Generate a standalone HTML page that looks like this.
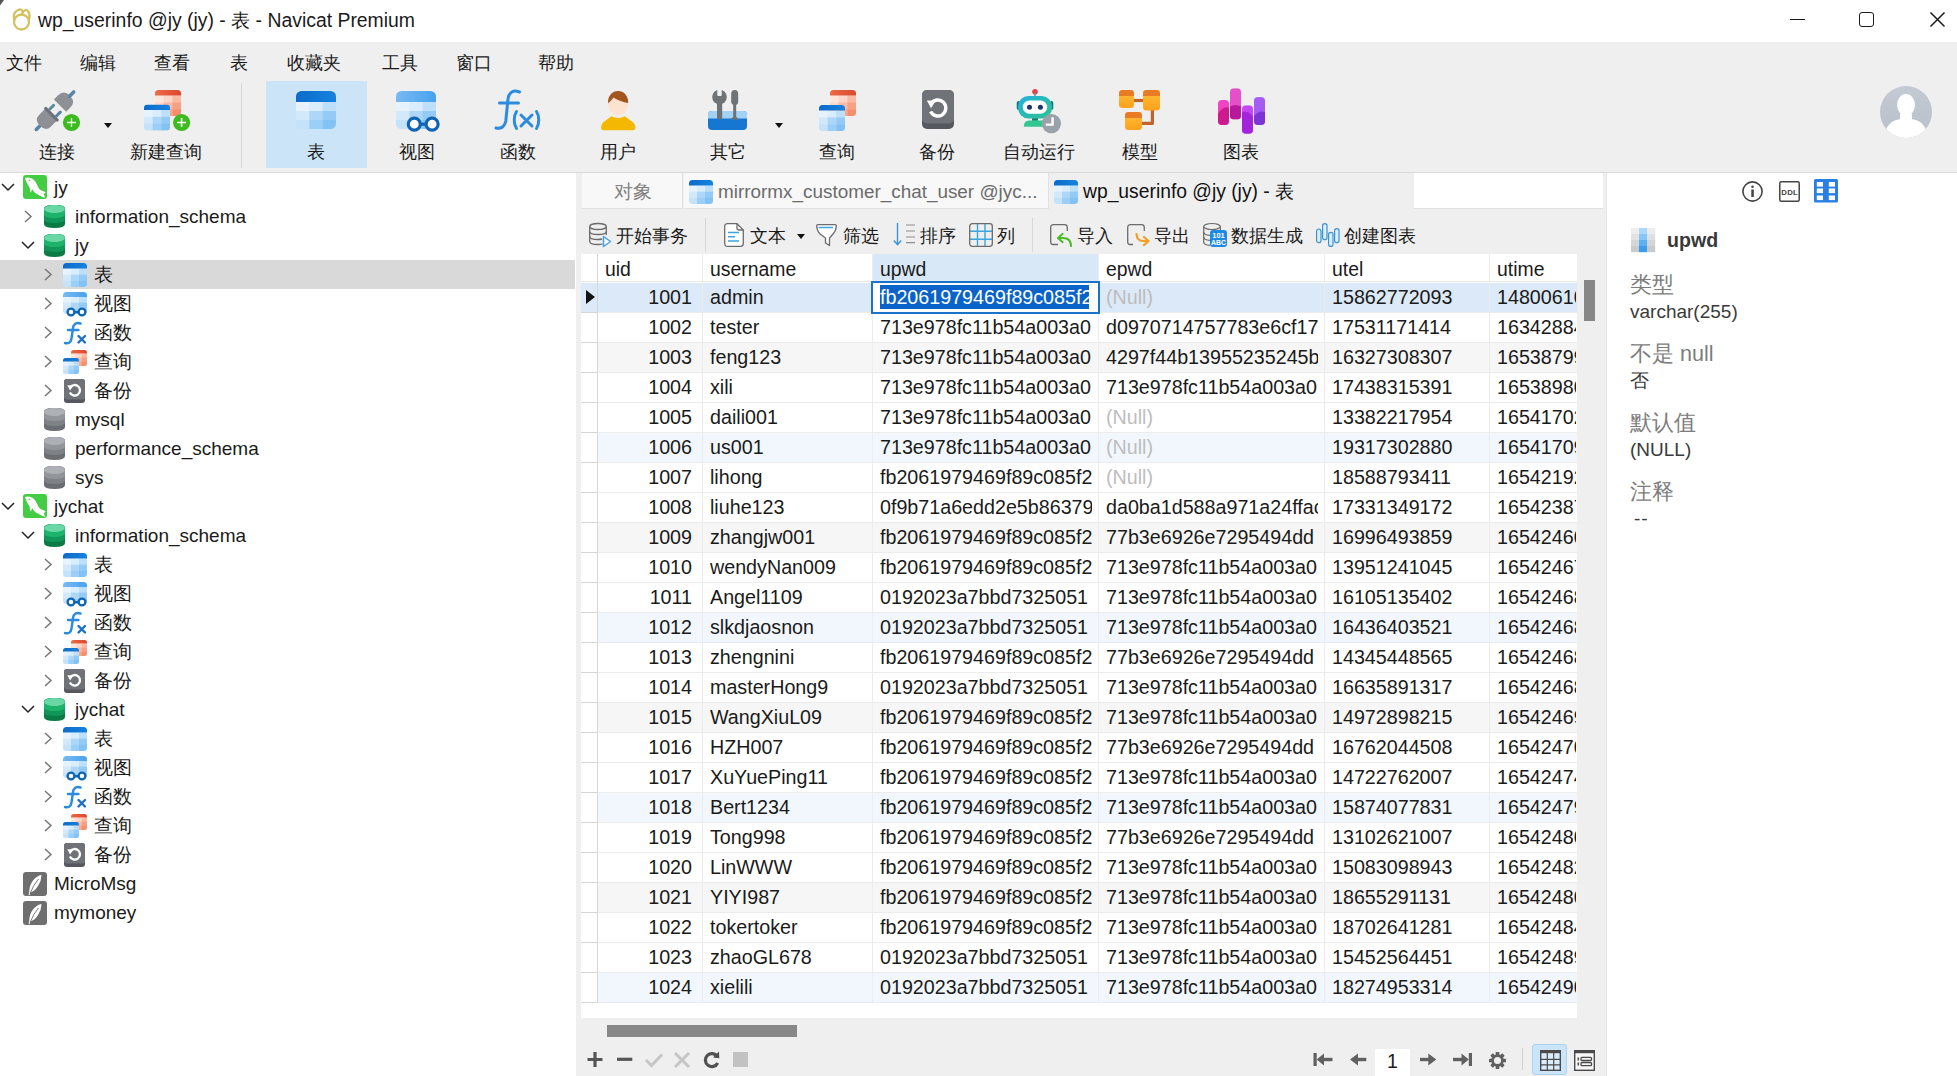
<!DOCTYPE html><html><head><meta charset="utf-8"><style>
*{margin:0;padding:0;box-sizing:border-box}
html,body{width:1957px;height:1076px;overflow:hidden;background:#efefef;font-family:"Liberation Sans",sans-serif;color:#1a1a1a}
.a{position:absolute}
.t{position:absolute;white-space:nowrap}
svg{position:absolute;overflow:visible}
</style></head><body>
<svg width="0" height="0" style="position:absolute"><defs>
<linearGradient id="gTH" x1="0" y1="0" x2="1" y2="0"><stop offset="0" stop-color="#0b6bcb"/><stop offset="1" stop-color="#1782de"/></linearGradient>
<linearGradient id="gVH" x1="0" y1="0" x2="1" y2="0"><stop offset="0" stop-color="#78b9f3"/><stop offset="1" stop-color="#48a2ee"/></linearGradient>
<linearGradient id="gRH" x1="0" y1="0" x2="1" y2="0"><stop offset="0" stop-color="#ef6a45"/><stop offset="1" stop-color="#d9482c"/></linearGradient>
<linearGradient id="gDBG" x1="0" y1="0" x2="0" y2="1"><stop offset="0" stop-color="#2fc27a"/><stop offset="1" stop-color="#0b7d45"/></linearGradient>
<linearGradient id="gDBX" x1="0" y1="0" x2="0" y2="1"><stop offset="0" stop-color="#a3a3a3"/><stop offset="1" stop-color="#6e6e6e"/></linearGradient>
<linearGradient id="gBars1" x1="0" y1="0" x2="0" y2="1"><stop offset="0" stop-color="#f052c8"/><stop offset="1" stop-color="#c0208f"/></linearGradient>
<linearGradient id="gBars2" x1="0" y1="0" x2="0" y2="1"><stop offset="0" stop-color="#c455f0"/><stop offset="1" stop-color="#8a2bd0"/></linearGradient>
<linearGradient id="gOr" x1="0" y1="0" x2="0" y2="1"><stop offset="0" stop-color="#ffbf3a"/><stop offset="1" stop-color="#fba21b"/></linearGradient>
<linearGradient id="gAva" x1="0" y1="0" x2="0" y2="1"><stop offset="0" stop-color="#c3cad3"/><stop offset="1" stop-color="#b8c0ca"/></linearGradient>
</defs></svg>
<div class="a" style="left:0;top:0;width:1957px;height:42px;background:#fff"></div>
<div class="t" style="left:38px;top:6.5px;font-size:19.4px;line-height:26px">wp_userinfo @jy (jy) - 表 - Navicat Premium</div>
<svg style="left:0;top:0" width="6" height="6"><path d="M0 0H4L0 5.5Z" fill="#555"/></svg>
<div class="a" style="left:1790px;top:18.5px;width:15px;height:1.2px;background:#1a1a1a"></div>
<div class="a" style="left:1859px;top:12px;width:15px;height:15px;border:1.8px solid #1a1a1a;border-radius:3px"></div>
<svg style="left:1930px;top:12px" width="15" height="15"><path d="M0.5 0.5L14.5 14.5M14.5 0.5L0.5 14.5" stroke="#1a1a1a" stroke-width="1.5"/></svg>
<div class="t" style="left:6px;top:49.5px;font-size:18.2px;line-height:26px">文件</div>
<div class="t" style="left:80px;top:49.5px;font-size:18.2px;line-height:26px">编辑</div>
<div class="t" style="left:154px;top:49.5px;font-size:18.2px;line-height:26px">查看</div>
<div class="t" style="left:230px;top:49.5px;font-size:18.2px;line-height:26px">表</div>
<div class="t" style="left:287px;top:49.5px;font-size:18.2px;line-height:26px">收藏夹</div>
<div class="t" style="left:382px;top:49.5px;font-size:18.2px;line-height:26px">工具</div>
<div class="t" style="left:456px;top:49.5px;font-size:18.2px;line-height:26px">窗口</div>
<div class="t" style="left:538px;top:49.5px;font-size:18.2px;line-height:26px">帮助</div>
<div class="a" style="left:266px;top:81px;width:101px;height:87px;background:#cce4f7"></div>
<div class="a" style="left:241px;top:83px;width:1px;height:85px;background:#d8d8d8"></div>
<div class="t" style="left:-3px;width:120px;text-align:center;top:139px;font-size:18px;line-height:26px">连接</div>
<div class="t" style="left:106px;width:120px;text-align:center;top:139px;font-size:18px;line-height:26px">新建查询</div>
<div class="t" style="left:256px;width:120px;text-align:center;top:139px;font-size:18px;line-height:26px">表</div>
<div class="t" style="left:357px;width:120px;text-align:center;top:139px;font-size:18px;line-height:26px">视图</div>
<div class="t" style="left:458px;width:120px;text-align:center;top:139px;font-size:18px;line-height:26px">函数</div>
<div class="t" style="left:558px;width:120px;text-align:center;top:139px;font-size:18px;line-height:26px">用户</div>
<div class="t" style="left:668px;width:120px;text-align:center;top:139px;font-size:18px;line-height:26px">其它</div>
<div class="t" style="left:777px;width:120px;text-align:center;top:139px;font-size:18px;line-height:26px">查询</div>
<div class="t" style="left:877px;width:120px;text-align:center;top:139px;font-size:18px;line-height:26px">备份</div>
<div class="t" style="left:979px;width:120px;text-align:center;top:139px;font-size:18px;line-height:26px">自动运行</div>
<div class="t" style="left:1080px;width:120px;text-align:center;top:139px;font-size:18px;line-height:26px">模型</div>
<div class="t" style="left:1181px;width:120px;text-align:center;top:139px;font-size:18px;line-height:26px">图表</div>
<svg style="left:104px;top:123px" width="8" height="5"><path d="M0 0H8L4 5Z" fill="#111"/></svg>
<svg style="left:775px;top:123px" width="8" height="5"><path d="M0 0H8L4 5Z" fill="#111"/></svg>
<svg style="left:10px;top:8px" width="23" height="23" viewBox="0 0 23 23"><g fill="none" stroke="#d3c260" stroke-width="2.3"><ellipse cx="11.5" cy="14" rx="7.5" ry="7.5"/><path d="M4.5 13 Q2 5 8 2 Q12 0 13 5"/><path d="M18.5 13 Q21 6 17.5 2.5 Q14 1 12 6"/></g></svg>
<svg style="left:34px;top:89px" width="48" height="44" viewBox="0 0 48 44"><g transform="translate(20.799999999999997,21.900000000000006) rotate(-45)"><rect x="-28" y="-1.8" width="10" height="3.6" rx="1.8" fill="#5b83a6"/><path d="M-5 -8.3 H-14 Q-21 -8.3 -21 0 Q-21 8.3 -14 8.3 H-5Z" fill="#8d9196"/><rect x="-6.3" y="-9.6" width="3.2" height="19.2" rx="1.4" fill="#6e7276"/><rect x="-4" y="-6.3" width="8.5" height="3" rx="1.5" fill="#5b8e9c"/><rect x="-4" y="3.3" width="8.5" height="3" rx="1.5" fill="#5b83a6"/><path d="M7.4 -8.7 H13 Q21.5 -8.7 21.5 0 Q21.5 8.7 13 8.7 H7.4Z" fill="#8d9196"/><rect x="19" y="-1.8" width="9.5" height="3.6" rx="1.8" fill="#5b83a6"/></g><circle cx="37.5" cy="33.5" r="8.6" fill="#3dbb1e"/><path d="M33 33.5H42M37.5 29V38" stroke="#e8ffe0" stroke-width="1.3"/></svg>
<svg style="left:144px;top:90px" width="48" height="44" viewBox="0 0 48 44"><g transform="translate(11,0)"><clipPath id="tc1"><rect width="26" height="26" rx="3.5"/></clipPath><g clip-path="url(#tc1)"><rect x="0.00" y="5.50" width="8.97" height="7.13" fill="#fde6dc"/><rect x="8.67" y="5.50" width="8.97" height="7.13" fill="#fcd6c8"/><rect x="17.33" y="5.50" width="8.97" height="7.13" fill="#f9b9a3"/><rect x="0.00" y="12.33" width="8.97" height="7.13" fill="#fcd9cb"/><rect x="8.67" y="12.33" width="8.97" height="7.13" fill="#f9bba5"/><rect x="17.33" y="12.33" width="8.97" height="7.13" fill="#f6a084"/><rect x="0.00" y="19.17" width="8.97" height="7.13" fill="#fbc9b6"/><rect x="8.67" y="19.17" width="8.97" height="7.13" fill="#f7a98f"/><rect x="17.33" y="19.17" width="8.97" height="7.13" fill="#f38e6f"/><rect width="26" height="5.5" fill="url(#gRH)"/></g></g><g transform="translate(0,14.5)"><clipPath id="tc2"><rect width="26" height="26" rx="3.5"/></clipPath><g clip-path="url(#tc2)"><rect x="0.00" y="5.50" width="8.97" height="7.13" fill="#e6f3fd"/><rect x="8.67" y="5.50" width="8.97" height="7.13" fill="#d9edfc"/><rect x="17.33" y="5.50" width="8.97" height="7.13" fill="#bcdffa"/><rect x="0.00" y="12.33" width="8.97" height="7.13" fill="#d2e8fb"/><rect x="8.67" y="12.33" width="8.97" height="7.13" fill="#add6f8"/><rect x="17.33" y="12.33" width="8.97" height="7.13" fill="#94caf6"/><rect x="0.00" y="19.17" width="8.97" height="7.13" fill="#c4e2f9"/><rect x="8.67" y="19.17" width="8.97" height="7.13" fill="#9bcff7"/><rect x="17.33" y="19.17" width="8.97" height="7.13" fill="#82c2f4"/><rect width="26" height="5.5" fill="url(#gTH)"/></g></g><circle cx="37.6" cy="32.5" r="8.6" fill="#3dbb1e"/><path d="M33.1 32.5H42.1M37.6 28.0V37.0" stroke="#fff" stroke-width="1.6"/></svg>
<svg style="left:296px;top:91px" width="40" height="38" viewBox="0 0 40 38"><clipPath id="tc3"><rect width="40" height="38" rx="5.5"/></clipPath><g clip-path="url(#tc3)"><rect x="0.00" y="11.00" width="13.63" height="9.30" fill="#e6f3fd"/><rect x="13.33" y="11.00" width="13.63" height="9.30" fill="#d9edfc"/><rect x="26.67" y="11.00" width="13.63" height="9.30" fill="#bcdffa"/><rect x="0.00" y="20.00" width="13.63" height="9.30" fill="#d2e8fb"/><rect x="13.33" y="20.00" width="13.63" height="9.30" fill="#add6f8"/><rect x="26.67" y="20.00" width="13.63" height="9.30" fill="#94caf6"/><rect x="0.00" y="29.00" width="13.63" height="9.30" fill="#c4e2f9"/><rect x="13.33" y="29.00" width="13.63" height="9.30" fill="#9bcff7"/><rect x="26.67" y="29.00" width="13.63" height="9.30" fill="#82c2f4"/><rect width="40" height="11" fill="url(#gTH)"/></g></svg>
<svg style="left:396px;top:91px" width="44" height="42" viewBox="0 0 44 42"><clipPath id="tc4"><rect width="40" height="38" rx="5.5"/></clipPath><g clip-path="url(#tc4)"><rect x="0.00" y="11.00" width="13.63" height="9.30" fill="#e6f3fd"/><rect x="13.33" y="11.00" width="13.63" height="9.30" fill="#d9edfc"/><rect x="26.67" y="11.00" width="13.63" height="9.30" fill="#bcdffa"/><rect x="0.00" y="20.00" width="13.63" height="9.30" fill="#d2e8fb"/><rect x="13.33" y="20.00" width="13.63" height="9.30" fill="#add6f8"/><rect x="26.67" y="20.00" width="13.63" height="9.30" fill="#94caf6"/><rect x="0.00" y="29.00" width="13.63" height="9.30" fill="#c4e2f9"/><rect x="13.33" y="29.00" width="13.63" height="9.30" fill="#9bcff7"/><rect x="26.67" y="29.00" width="13.63" height="9.30" fill="#82c2f4"/><rect width="40" height="11" fill="url(#gVH)"/></g><g fill="#fff" stroke="#0f64b4" stroke-width="3.2"><circle cx="18.3" cy="33.2" r="6"/><circle cx="36.1" cy="33.2" r="6"/></g><rect x="23.5" y="31.6" width="7" height="3.2" fill="#0f64b4"/></svg>
<svg style="left:490px;top:79px" width="56" height="56" viewBox="0 0 56 56"><g fill="none" stroke="#2a8be0" stroke-width="3" stroke-linecap="round"><path d="M29.5 13 C23.5 10.5 19 13 18 20 L15.8 42 C14.8 47.5 11.5 50 6 49"/><path d="M9.5 24 H28.5"/><path d="M26.5 32.5 C23.5 37 23.5 45 26.5 49.5"/><path d="M46.5 32.5 C49.5 37 49.5 45 46.5 49.5"/><path d="M31 36 L42 47 M42 36 L31 47"/></g></svg>
<svg style="left:600px;top:91px" width="37" height="40" viewBox="0 0 37 40"><ellipse cx="18.1" cy="12.4" rx="10.1" ry="12.2" fill="#fde3cf"/><path d="M8 12.2C7.8 4.5 12.5 0 18.1 0C23.7 0 28.4 4.5 28.2 12C23 11.2 18 9.2 13.4 6.5C12 8.8 10 10.8 8 12.2Z" fill="#a3541f"/><path d="M1 36.3Q1 33 4.2 30.6L11.5 25.2Q14.6 27 18.1 27Q21.6 27 24.7 25.2L32 30.6Q35.4 33 35.4 36.3Q35.4 39.2 32.8 39.2H3.6Q1 39.2 1 36.3Z" fill="#f5b800"/></svg>
<svg style="left:708px;top:90px" width="40" height="40" viewBox="0 0 40 40"><rect x="0" y="21" width="39" height="19" rx="4" fill="#1677d3"/><path d="M4 21H35Q39 21 39 25V28.5H0V25Q0 21 4 21Z" fill="#a3d2f7"/><g fill="#6e7377"><circle cx="11.5" cy="7" r="7.3"/><rect x="9" y="9" width="5.2" height="20"/><path d="M23.2 4Q23.2 0 26.7 0Q30.2 0 30.2 4V12Q30.2 14 28.2 15V27L31.5 29.5H22L25.2 27V15Q23.2 14 23.2 12Z"/></g><rect x="9.3" y="-1" width="4.4" height="7" rx="1" fill="#efefef"/></svg>
<svg style="left:819px;top:90px" width="38" height="41" viewBox="0 0 38 41"><g transform="translate(11,0)"><clipPath id="tc5"><rect width="26" height="26" rx="3.5"/></clipPath><g clip-path="url(#tc5)"><rect x="0.00" y="5.50" width="8.97" height="7.13" fill="#fde6dc"/><rect x="8.67" y="5.50" width="8.97" height="7.13" fill="#fcd6c8"/><rect x="17.33" y="5.50" width="8.97" height="7.13" fill="#f9b9a3"/><rect x="0.00" y="12.33" width="8.97" height="7.13" fill="#fcd9cb"/><rect x="8.67" y="12.33" width="8.97" height="7.13" fill="#f9bba5"/><rect x="17.33" y="12.33" width="8.97" height="7.13" fill="#f6a084"/><rect x="0.00" y="19.17" width="8.97" height="7.13" fill="#fbc9b6"/><rect x="8.67" y="19.17" width="8.97" height="7.13" fill="#f7a98f"/><rect x="17.33" y="19.17" width="8.97" height="7.13" fill="#f38e6f"/><rect width="26" height="5.5" fill="url(#gRH)"/></g></g><g transform="translate(0,15)"><clipPath id="tc6"><rect width="26" height="26" rx="3.5"/></clipPath><g clip-path="url(#tc6)"><rect x="0.00" y="5.50" width="8.97" height="7.13" fill="#e6f3fd"/><rect x="8.67" y="5.50" width="8.97" height="7.13" fill="#d9edfc"/><rect x="17.33" y="5.50" width="8.97" height="7.13" fill="#bcdffa"/><rect x="0.00" y="12.33" width="8.97" height="7.13" fill="#d2e8fb"/><rect x="8.67" y="12.33" width="8.97" height="7.13" fill="#add6f8"/><rect x="17.33" y="12.33" width="8.97" height="7.13" fill="#94caf6"/><rect x="0.00" y="19.17" width="8.97" height="7.13" fill="#c4e2f9"/><rect x="8.67" y="19.17" width="8.97" height="7.13" fill="#9bcff7"/><rect x="17.33" y="19.17" width="8.97" height="7.13" fill="#82c2f4"/><rect width="26" height="5.5" fill="url(#gTH)"/></g></g></svg>
<svg style="left:922px;top:90px" width="32" height="39" viewBox="0 0 32 39"><rect x="0" y="0" width="32" height="39" rx="5" fill="#55595d"/><rect x="0" y="0" width="32" height="33.5" rx="5" fill="#6f7377"/><path d="M9.2 13.5A8 8 0 1 1 8.6 21.5" fill="none" stroke="#fff" stroke-width="3.4"/><path d="M4.8 10.5L13.8 10.8L9 18.3Z" fill="#fff"/></svg>
<svg style="left:1017px;top:88px" width="46" height="46" viewBox="0 0 46 46"><linearGradient id="gRob" x1="0" y1="0" x2="1" y2="1"><stop offset="0" stop-color="#25b2dc"/><stop offset="1" stop-color="#2cc28f"/></linearGradient><circle cx="18" cy="3.8" r="2.8" fill="#e8404a"/><rect x="17.3" y="5" width="1.4" height="3.5" fill="#6b8e96"/><rect x="-0.3" y="13" width="4" height="9" rx="2" fill="#137a84"/><rect x="32.3" y="13" width="4" height="9" rx="2" fill="#137a84"/><rect x="1" y="8" width="34" height="22.5" rx="10.5" fill="url(#gRob)"/><rect x="5.8" y="12.5" width="24.4" height="13.3" rx="6.6" fill="#fff"/><circle cx="12.5" cy="19.3" r="2.5" fill="#1d3470"/><circle cx="23.4" cy="19.3" r="2.5" fill="#1d3470"/><rect x="15" y="30.3" width="6" height="2.6" fill="#10806a"/><path d="M6.8 38.7 Q6.8 32.6 12 32.6 L26 32.6 L26 38.7Z" fill="#33c794"/><circle cx="34.4" cy="35.6" r="9.6" fill="#9aa1a9"/><path d="M35.6 29.3 V36.6 H28.8" fill="none" stroke="#fff" stroke-width="2.4"/></svg>
<svg style="left:1119px;top:90px" width="42" height="41" viewBox="0 0 42 41"><g stroke="#c0652a" stroke-width="3.2" fill="none" stroke-linejoin="round"><path d="M14 10.5 H25"/><path d="M33.4 20 V33.4 H22"/></g><rect x="0" y="0" width="15" height="18" rx="3.5" fill="url(#gOr)"/><path d="M0 3.5 Q0 0 3.5 0 H11.5 Q15 0 15 3.5 V6 H0Z" fill="#e97b24"/><rect x="24" y="0" width="17" height="20.6" rx="3.5" fill="url(#gOr)"/><path d="M24 3.5 Q24 0 27.5 0 H37.5 Q41 0 41 3.5 V6 H24Z" fill="#e97b24"/><rect x="6" y="22" width="17" height="18" rx="3.5" fill="url(#gOr)"/><path d="M6 25.5 Q6 22 9.5 22 H19.5 Q23 22 23 25.5 V28 H6Z" fill="#e97b24"/></svg>
<svg style="left:1218px;top:82px" width="47" height="52" viewBox="0 0 47 52"><clipPath id="cb0"><rect x="0" y="18" width="11" height="25" rx="4"/></clipPath><g clip-path="url(#cb0)"><rect x="0" y="18" width="11" height="25" fill="#f243c4"/><path d="M0 31.8 Q5.5 23.4 11 25.9 V43 H0Z" fill="#cf1a8e"/></g><clipPath id="cb12"><rect x="12" y="6.2" width="11" height="31.3" rx="4"/></clipPath><g clip-path="url(#cb12)"><rect x="12" y="6.2" width="11" height="31.3" fill="#e54fc9"/><path d="M12 24.5 Q17.5 22.0 23 24.5 V37.5 H12Z" fill="#b9189c"/></g><clipPath id="cb24"><rect x="24" y="23.2" width="11" height="28.6" rx="4"/></clipPath><g clip-path="url(#cb24)"><rect x="24" y="23.2" width="11" height="28.6" fill="#c447f5"/><path d="M24 30.2 Q29.5 27.7 35 35 V51.8 H24Z" fill="#a424dc"/></g><clipPath id="cb36"><rect x="36" y="15.1" width="11" height="27.8" rx="4"/></clipPath><g clip-path="url(#cb36)"><rect x="36" y="15.1" width="11" height="27.8" fill="#a45cf2"/><path d="M36 34 Q41.5 27.7 47 30.2 V42.9 H36Z" fill="#7c34d4"/></g></svg>
<svg style="left:1880px;top:86px" width="52" height="52" viewBox="0 0 52 52"><circle cx="26" cy="26" r="26" fill="url(#gAva)"/><clipPath id="avc"><circle cx="26" cy="26" r="26"/></clipPath><g clip-path="url(#avc)" fill="#fff"><ellipse cx="26" cy="19" rx="9" ry="11"/><path d="M20 28 H32 V34 H20Z"/><path d="M4 56 Q4 34 22 33 H30 Q48 34 48 56Z"/></g></svg>
<div class="a" style="left:0;top:172px;width:1957px;height:1px;background:#d9d9d9"></div>
<div class="a" style="left:0;top:173px;width:576px;height:903px;background:#fff"></div>
<div class="a" style="left:0;top:260px;width:575px;height:29px;background:#d9d9d9"></div>
<svg style="left:1px;top:183px" width="14" height="8"><path d="M1 1L7 7L13 1" fill="none" stroke="#222" stroke-width="1.5"/></svg>
<svg style="left:23px;top:175px" width="24" height="24" viewBox="0 0 24 24"><rect x="0" y="0" width="24" height="24" rx="3" fill="#45cc45"/><path d="M2 3C4.5 1.8 8.5 2.3 11 5C13.3 7.5 14.3 10 15.3 12.5C16.3 14.5 18.3 15.6 21.2 16.6L22.6 17.6L20.8 19.3L22 22.6C19.5 22.2 17.4 21.2 15.4 19.7C12.4 18.7 10.4 16.7 9.4 14.2L7.4 17.8L6.6 12.6C4.8 10 3.3 7 2 3Z" fill="#fff"/><circle cx="6.3" cy="5.3" r=".8" fill="#45cc45"/></svg>
<div class="t" style="left:54px;top:174px;font-size:19px;line-height:27px">jy</div>
<svg style="left:24px;top:210px" width="8" height="13"><path d="M1 1L7 6.5L1 12" fill="none" stroke="#777" stroke-width="1.5"/></svg>
<svg style="left:44px;top:205px" width="21" height="23" viewBox="0 0 21 23"><path d="M0 4 Q0 0 10.5 0 Q21 0 21 4 V19 Q21 23 10.5 23 Q0 23 0 19Z" fill="#0b7b46"/><path d="M0 4 Q0 0 10.5 0 Q21 0 21 4 V14 Q21 18 10.5 18 Q0 18 0 14Z" fill="#109659"/><path d="M0 4 Q0 0 10.5 0 Q21 0 21 4 V9 Q21 13 10.5 13 Q0 13 0 9Z" fill="#1db36b"/><ellipse cx="10.5" cy="4" rx="10.5" ry="4" fill="#6ad8a6"/></svg>
<div class="t" style="left:75px;top:203px;font-size:19px;line-height:27px">information_schema</div>
<svg style="left:21px;top:241px" width="14" height="8"><path d="M1 1L7 7L13 1" fill="none" stroke="#222" stroke-width="1.5"/></svg>
<svg style="left:44px;top:234px" width="21" height="23" viewBox="0 0 21 23"><path d="M0 4 Q0 0 10.5 0 Q21 0 21 4 V19 Q21 23 10.5 23 Q0 23 0 19Z" fill="#0b7b46"/><path d="M0 4 Q0 0 10.5 0 Q21 0 21 4 V14 Q21 18 10.5 18 Q0 18 0 14Z" fill="#109659"/><path d="M0 4 Q0 0 10.5 0 Q21 0 21 4 V9 Q21 13 10.5 13 Q0 13 0 9Z" fill="#1db36b"/><ellipse cx="10.5" cy="4" rx="10.5" ry="4" fill="#6ad8a6"/></svg>
<div class="t" style="left:75px;top:232px;font-size:19px;line-height:27px">jy</div>
<svg style="left:44px;top:268px" width="8" height="13"><path d="M1 1L7 6.5L1 12" fill="none" stroke="#777" stroke-width="1.5"/></svg>
<svg style="left:63px;top:263px" width="24" height="24" viewBox="0 0 24 24"><clipPath id="tc7"><rect width="24" height="24" rx="3.5"/></clipPath><g clip-path="url(#tc7)"><rect x="0.00" y="5.50" width="8.30" height="6.47" fill="#e6f3fd"/><rect x="8.00" y="5.50" width="8.30" height="6.47" fill="#d9edfc"/><rect x="16.00" y="5.50" width="8.30" height="6.47" fill="#bcdffa"/><rect x="0.00" y="11.67" width="8.30" height="6.47" fill="#d2e8fb"/><rect x="8.00" y="11.67" width="8.30" height="6.47" fill="#add6f8"/><rect x="16.00" y="11.67" width="8.30" height="6.47" fill="#94caf6"/><rect x="0.00" y="17.83" width="8.30" height="6.47" fill="#c4e2f9"/><rect x="8.00" y="17.83" width="8.30" height="6.47" fill="#9bcff7"/><rect x="16.00" y="17.83" width="8.30" height="6.47" fill="#82c2f4"/><rect width="24" height="5.5" fill="url(#gTH)"/></g></svg>
<div class="t" style="left:94px;top:261px;font-size:19px;line-height:27px">表</div>
<svg style="left:44px;top:297px" width="8" height="13"><path d="M1 1L7 6.5L1 12" fill="none" stroke="#777" stroke-width="1.5"/></svg>
<svg style="left:63px;top:292px" width="24" height="24" viewBox="0 0 24 24"><clipPath id="tc8"><rect width="24" height="22" rx="3.5"/></clipPath><g clip-path="url(#tc8)"><rect x="0.00" y="5.00" width="8.30" height="5.97" fill="#e6f3fd"/><rect x="8.00" y="5.00" width="8.30" height="5.97" fill="#d9edfc"/><rect x="16.00" y="5.00" width="8.30" height="5.97" fill="#bcdffa"/><rect x="0.00" y="10.67" width="8.30" height="5.97" fill="#d2e8fb"/><rect x="8.00" y="10.67" width="8.30" height="5.97" fill="#add6f8"/><rect x="16.00" y="10.67" width="8.30" height="5.97" fill="#94caf6"/><rect x="0.00" y="16.33" width="8.30" height="5.97" fill="#c4e2f9"/><rect x="8.00" y="16.33" width="8.30" height="5.97" fill="#9bcff7"/><rect x="16.00" y="16.33" width="8.30" height="5.97" fill="#82c2f4"/><rect width="24" height="5" fill="url(#gVH)"/></g><g fill="#fff" stroke="#0f64b4" stroke-width="2.3"><circle cx="8" cy="20" r="3.4"/><circle cx="19" cy="20" r="3.4"/></g><rect x="11" y="19" width="4.5" height="2.2" fill="#0f64b4"/></svg>
<div class="t" style="left:94px;top:290px;font-size:19px;line-height:27px">视图</div>
<svg style="left:44px;top:326px" width="8" height="13"><path d="M1 1L7 6.5L1 12" fill="none" stroke="#777" stroke-width="1.5"/></svg>
<svg style="left:63px;top:321px" width="24" height="24" viewBox="0 0 24 24"><g fill="none" stroke="#2a8be0" stroke-width="2.4" stroke-linecap="round"><path d="M17.5 2.5 C13 1 10.5 3 10 7 L8.5 17.5 C8 21.5 5.5 23 2 22"/><path d="M5 9 H15.5"/></g><path d="M15.5 15 L22 21.5 M22 15 L15.5 21.5" stroke="#1a6fc7" stroke-width="2.4" stroke-linecap="round"/></svg>
<div class="t" style="left:94px;top:319px;font-size:19px;line-height:27px">函数</div>
<svg style="left:44px;top:355px" width="8" height="13"><path d="M1 1L7 6.5L1 12" fill="none" stroke="#777" stroke-width="1.5"/></svg>
<svg style="left:63px;top:350px" width="24" height="24" viewBox="0 0 24 24"><g transform="translate(8,0)"><clipPath id="tc9"><rect width="16" height="16" rx="2.5"/></clipPath><g clip-path="url(#tc9)"><rect x="0.00" y="3.50" width="5.63" height="4.47" fill="#fde6dc"/><rect x="5.33" y="3.50" width="5.63" height="4.47" fill="#fcd6c8"/><rect x="10.67" y="3.50" width="5.63" height="4.47" fill="#f9b9a3"/><rect x="0.00" y="7.67" width="5.63" height="4.47" fill="#fcd9cb"/><rect x="5.33" y="7.67" width="5.63" height="4.47" fill="#f9bba5"/><rect x="10.67" y="7.67" width="5.63" height="4.47" fill="#f6a084"/><rect x="0.00" y="11.83" width="5.63" height="4.47" fill="#fbc9b6"/><rect x="5.33" y="11.83" width="5.63" height="4.47" fill="#f7a98f"/><rect x="10.67" y="11.83" width="5.63" height="4.47" fill="#f38e6f"/><rect width="16" height="3.5" fill="url(#gRH)"/></g></g><g transform="translate(0,8)"><clipPath id="tc10"><rect width="16" height="16" rx="2.5"/></clipPath><g clip-path="url(#tc10)"><rect x="0.00" y="3.50" width="5.63" height="4.47" fill="#e6f3fd"/><rect x="5.33" y="3.50" width="5.63" height="4.47" fill="#d9edfc"/><rect x="10.67" y="3.50" width="5.63" height="4.47" fill="#bcdffa"/><rect x="0.00" y="7.67" width="5.63" height="4.47" fill="#d2e8fb"/><rect x="5.33" y="7.67" width="5.63" height="4.47" fill="#add6f8"/><rect x="10.67" y="7.67" width="5.63" height="4.47" fill="#94caf6"/><rect x="0.00" y="11.83" width="5.63" height="4.47" fill="#c4e2f9"/><rect x="5.33" y="11.83" width="5.63" height="4.47" fill="#9bcff7"/><rect x="10.67" y="11.83" width="5.63" height="4.47" fill="#82c2f4"/><rect width="16" height="3.5" fill="url(#gTH)"/></g></g></svg>
<div class="t" style="left:94px;top:348px;font-size:19px;line-height:27px">查询</div>
<svg style="left:44px;top:384px" width="8" height="13"><path d="M1 1L7 6.5L1 12" fill="none" stroke="#777" stroke-width="1.5"/></svg>
<svg style="left:63px;top:379px" width="24" height="24" viewBox="0 0 24 24"><rect x="1" y="0" width="21" height="24" rx="3" fill="#55595d"/><rect x="1" y="0" width="21" height="20.5" rx="3" fill="#6f7377"/><path d="M7.3 8.3A5.3 5.3 0 1 1 6.9 13.6" fill="none" stroke="#fff" stroke-width="2.3"/><path d="M4.3 6.3L10.3 6.5L7.1 11.5Z" fill="#fff"/></svg>
<div class="t" style="left:94px;top:377px;font-size:19px;line-height:27px">备份</div>
<svg style="left:44px;top:408px" width="21" height="23" viewBox="0 0 21 23"><path d="M0 4 Q0 0 10.5 0 Q21 0 21 4 V19 Q21 23 10.5 23 Q0 23 0 19Z" fill="#6a6e73"/><path d="M0 4 Q0 0 10.5 0 Q21 0 21 4 V14 Q21 18 10.5 18 Q0 18 0 14Z" fill="#7e8287"/><path d="M0 4 Q0 0 10.5 0 Q21 0 21 4 V9 Q21 13 10.5 13 Q0 13 0 9Z" fill="#92969b"/><ellipse cx="10.5" cy="4" rx="10.5" ry="4" fill="#adb1b6"/></svg>
<div class="t" style="left:75px;top:406px;font-size:19px;line-height:27px">mysql</div>
<svg style="left:44px;top:437px" width="21" height="23" viewBox="0 0 21 23"><path d="M0 4 Q0 0 10.5 0 Q21 0 21 4 V19 Q21 23 10.5 23 Q0 23 0 19Z" fill="#6a6e73"/><path d="M0 4 Q0 0 10.5 0 Q21 0 21 4 V14 Q21 18 10.5 18 Q0 18 0 14Z" fill="#7e8287"/><path d="M0 4 Q0 0 10.5 0 Q21 0 21 4 V9 Q21 13 10.5 13 Q0 13 0 9Z" fill="#92969b"/><ellipse cx="10.5" cy="4" rx="10.5" ry="4" fill="#adb1b6"/></svg>
<div class="t" style="left:75px;top:435px;font-size:19px;line-height:27px">performance_schema</div>
<svg style="left:44px;top:466px" width="21" height="23" viewBox="0 0 21 23"><path d="M0 4 Q0 0 10.5 0 Q21 0 21 4 V19 Q21 23 10.5 23 Q0 23 0 19Z" fill="#6a6e73"/><path d="M0 4 Q0 0 10.5 0 Q21 0 21 4 V14 Q21 18 10.5 18 Q0 18 0 14Z" fill="#7e8287"/><path d="M0 4 Q0 0 10.5 0 Q21 0 21 4 V9 Q21 13 10.5 13 Q0 13 0 9Z" fill="#92969b"/><ellipse cx="10.5" cy="4" rx="10.5" ry="4" fill="#adb1b6"/></svg>
<div class="t" style="left:75px;top:464px;font-size:19px;line-height:27px">sys</div>
<svg style="left:1px;top:502px" width="14" height="8"><path d="M1 1L7 7L13 1" fill="none" stroke="#222" stroke-width="1.5"/></svg>
<svg style="left:23px;top:494px" width="24" height="24" viewBox="0 0 24 24"><rect x="0" y="0" width="24" height="24" rx="3" fill="#45cc45"/><path d="M2 3C4.5 1.8 8.5 2.3 11 5C13.3 7.5 14.3 10 15.3 12.5C16.3 14.5 18.3 15.6 21.2 16.6L22.6 17.6L20.8 19.3L22 22.6C19.5 22.2 17.4 21.2 15.4 19.7C12.4 18.7 10.4 16.7 9.4 14.2L7.4 17.8L6.6 12.6C4.8 10 3.3 7 2 3Z" fill="#fff"/><circle cx="6.3" cy="5.3" r=".8" fill="#45cc45"/></svg>
<div class="t" style="left:54px;top:493px;font-size:19px;line-height:27px">jychat</div>
<svg style="left:21px;top:531px" width="14" height="8"><path d="M1 1L7 7L13 1" fill="none" stroke="#222" stroke-width="1.5"/></svg>
<svg style="left:44px;top:524px" width="21" height="23" viewBox="0 0 21 23"><path d="M0 4 Q0 0 10.5 0 Q21 0 21 4 V19 Q21 23 10.5 23 Q0 23 0 19Z" fill="#0b7b46"/><path d="M0 4 Q0 0 10.5 0 Q21 0 21 4 V14 Q21 18 10.5 18 Q0 18 0 14Z" fill="#109659"/><path d="M0 4 Q0 0 10.5 0 Q21 0 21 4 V9 Q21 13 10.5 13 Q0 13 0 9Z" fill="#1db36b"/><ellipse cx="10.5" cy="4" rx="10.5" ry="4" fill="#6ad8a6"/></svg>
<div class="t" style="left:75px;top:522px;font-size:19px;line-height:27px">information_schema</div>
<svg style="left:44px;top:558px" width="8" height="13"><path d="M1 1L7 6.5L1 12" fill="none" stroke="#777" stroke-width="1.5"/></svg>
<svg style="left:63px;top:553px" width="24" height="24" viewBox="0 0 24 24"><clipPath id="tc11"><rect width="24" height="24" rx="3.5"/></clipPath><g clip-path="url(#tc11)"><rect x="0.00" y="5.50" width="8.30" height="6.47" fill="#e6f3fd"/><rect x="8.00" y="5.50" width="8.30" height="6.47" fill="#d9edfc"/><rect x="16.00" y="5.50" width="8.30" height="6.47" fill="#bcdffa"/><rect x="0.00" y="11.67" width="8.30" height="6.47" fill="#d2e8fb"/><rect x="8.00" y="11.67" width="8.30" height="6.47" fill="#add6f8"/><rect x="16.00" y="11.67" width="8.30" height="6.47" fill="#94caf6"/><rect x="0.00" y="17.83" width="8.30" height="6.47" fill="#c4e2f9"/><rect x="8.00" y="17.83" width="8.30" height="6.47" fill="#9bcff7"/><rect x="16.00" y="17.83" width="8.30" height="6.47" fill="#82c2f4"/><rect width="24" height="5.5" fill="url(#gTH)"/></g></svg>
<div class="t" style="left:94px;top:551px;font-size:19px;line-height:27px">表</div>
<svg style="left:44px;top:587px" width="8" height="13"><path d="M1 1L7 6.5L1 12" fill="none" stroke="#777" stroke-width="1.5"/></svg>
<svg style="left:63px;top:582px" width="24" height="24" viewBox="0 0 24 24"><clipPath id="tc12"><rect width="24" height="22" rx="3.5"/></clipPath><g clip-path="url(#tc12)"><rect x="0.00" y="5.00" width="8.30" height="5.97" fill="#e6f3fd"/><rect x="8.00" y="5.00" width="8.30" height="5.97" fill="#d9edfc"/><rect x="16.00" y="5.00" width="8.30" height="5.97" fill="#bcdffa"/><rect x="0.00" y="10.67" width="8.30" height="5.97" fill="#d2e8fb"/><rect x="8.00" y="10.67" width="8.30" height="5.97" fill="#add6f8"/><rect x="16.00" y="10.67" width="8.30" height="5.97" fill="#94caf6"/><rect x="0.00" y="16.33" width="8.30" height="5.97" fill="#c4e2f9"/><rect x="8.00" y="16.33" width="8.30" height="5.97" fill="#9bcff7"/><rect x="16.00" y="16.33" width="8.30" height="5.97" fill="#82c2f4"/><rect width="24" height="5" fill="url(#gVH)"/></g><g fill="#fff" stroke="#0f64b4" stroke-width="2.3"><circle cx="8" cy="20" r="3.4"/><circle cx="19" cy="20" r="3.4"/></g><rect x="11" y="19" width="4.5" height="2.2" fill="#0f64b4"/></svg>
<div class="t" style="left:94px;top:580px;font-size:19px;line-height:27px">视图</div>
<svg style="left:44px;top:616px" width="8" height="13"><path d="M1 1L7 6.5L1 12" fill="none" stroke="#777" stroke-width="1.5"/></svg>
<svg style="left:63px;top:611px" width="24" height="24" viewBox="0 0 24 24"><g fill="none" stroke="#2a8be0" stroke-width="2.4" stroke-linecap="round"><path d="M17.5 2.5 C13 1 10.5 3 10 7 L8.5 17.5 C8 21.5 5.5 23 2 22"/><path d="M5 9 H15.5"/></g><path d="M15.5 15 L22 21.5 M22 15 L15.5 21.5" stroke="#1a6fc7" stroke-width="2.4" stroke-linecap="round"/></svg>
<div class="t" style="left:94px;top:609px;font-size:19px;line-height:27px">函数</div>
<svg style="left:44px;top:645px" width="8" height="13"><path d="M1 1L7 6.5L1 12" fill="none" stroke="#777" stroke-width="1.5"/></svg>
<svg style="left:63px;top:640px" width="24" height="24" viewBox="0 0 24 24"><g transform="translate(8,0)"><clipPath id="tc13"><rect width="16" height="16" rx="2.5"/></clipPath><g clip-path="url(#tc13)"><rect x="0.00" y="3.50" width="5.63" height="4.47" fill="#fde6dc"/><rect x="5.33" y="3.50" width="5.63" height="4.47" fill="#fcd6c8"/><rect x="10.67" y="3.50" width="5.63" height="4.47" fill="#f9b9a3"/><rect x="0.00" y="7.67" width="5.63" height="4.47" fill="#fcd9cb"/><rect x="5.33" y="7.67" width="5.63" height="4.47" fill="#f9bba5"/><rect x="10.67" y="7.67" width="5.63" height="4.47" fill="#f6a084"/><rect x="0.00" y="11.83" width="5.63" height="4.47" fill="#fbc9b6"/><rect x="5.33" y="11.83" width="5.63" height="4.47" fill="#f7a98f"/><rect x="10.67" y="11.83" width="5.63" height="4.47" fill="#f38e6f"/><rect width="16" height="3.5" fill="url(#gRH)"/></g></g><g transform="translate(0,8)"><clipPath id="tc14"><rect width="16" height="16" rx="2.5"/></clipPath><g clip-path="url(#tc14)"><rect x="0.00" y="3.50" width="5.63" height="4.47" fill="#e6f3fd"/><rect x="5.33" y="3.50" width="5.63" height="4.47" fill="#d9edfc"/><rect x="10.67" y="3.50" width="5.63" height="4.47" fill="#bcdffa"/><rect x="0.00" y="7.67" width="5.63" height="4.47" fill="#d2e8fb"/><rect x="5.33" y="7.67" width="5.63" height="4.47" fill="#add6f8"/><rect x="10.67" y="7.67" width="5.63" height="4.47" fill="#94caf6"/><rect x="0.00" y="11.83" width="5.63" height="4.47" fill="#c4e2f9"/><rect x="5.33" y="11.83" width="5.63" height="4.47" fill="#9bcff7"/><rect x="10.67" y="11.83" width="5.63" height="4.47" fill="#82c2f4"/><rect width="16" height="3.5" fill="url(#gTH)"/></g></g></svg>
<div class="t" style="left:94px;top:638px;font-size:19px;line-height:27px">查询</div>
<svg style="left:44px;top:674px" width="8" height="13"><path d="M1 1L7 6.5L1 12" fill="none" stroke="#777" stroke-width="1.5"/></svg>
<svg style="left:63px;top:669px" width="24" height="24" viewBox="0 0 24 24"><rect x="1" y="0" width="21" height="24" rx="3" fill="#55595d"/><rect x="1" y="0" width="21" height="20.5" rx="3" fill="#6f7377"/><path d="M7.3 8.3A5.3 5.3 0 1 1 6.9 13.6" fill="none" stroke="#fff" stroke-width="2.3"/><path d="M4.3 6.3L10.3 6.5L7.1 11.5Z" fill="#fff"/></svg>
<div class="t" style="left:94px;top:667px;font-size:19px;line-height:27px">备份</div>
<svg style="left:21px;top:705px" width="14" height="8"><path d="M1 1L7 7L13 1" fill="none" stroke="#222" stroke-width="1.5"/></svg>
<svg style="left:44px;top:698px" width="21" height="23" viewBox="0 0 21 23"><path d="M0 4 Q0 0 10.5 0 Q21 0 21 4 V19 Q21 23 10.5 23 Q0 23 0 19Z" fill="#0b7b46"/><path d="M0 4 Q0 0 10.5 0 Q21 0 21 4 V14 Q21 18 10.5 18 Q0 18 0 14Z" fill="#109659"/><path d="M0 4 Q0 0 10.5 0 Q21 0 21 4 V9 Q21 13 10.5 13 Q0 13 0 9Z" fill="#1db36b"/><ellipse cx="10.5" cy="4" rx="10.5" ry="4" fill="#6ad8a6"/></svg>
<div class="t" style="left:75px;top:696px;font-size:19px;line-height:27px">jychat</div>
<svg style="left:44px;top:732px" width="8" height="13"><path d="M1 1L7 6.5L1 12" fill="none" stroke="#777" stroke-width="1.5"/></svg>
<svg style="left:63px;top:727px" width="24" height="24" viewBox="0 0 24 24"><clipPath id="tc15"><rect width="24" height="24" rx="3.5"/></clipPath><g clip-path="url(#tc15)"><rect x="0.00" y="5.50" width="8.30" height="6.47" fill="#e6f3fd"/><rect x="8.00" y="5.50" width="8.30" height="6.47" fill="#d9edfc"/><rect x="16.00" y="5.50" width="8.30" height="6.47" fill="#bcdffa"/><rect x="0.00" y="11.67" width="8.30" height="6.47" fill="#d2e8fb"/><rect x="8.00" y="11.67" width="8.30" height="6.47" fill="#add6f8"/><rect x="16.00" y="11.67" width="8.30" height="6.47" fill="#94caf6"/><rect x="0.00" y="17.83" width="8.30" height="6.47" fill="#c4e2f9"/><rect x="8.00" y="17.83" width="8.30" height="6.47" fill="#9bcff7"/><rect x="16.00" y="17.83" width="8.30" height="6.47" fill="#82c2f4"/><rect width="24" height="5.5" fill="url(#gTH)"/></g></svg>
<div class="t" style="left:94px;top:725px;font-size:19px;line-height:27px">表</div>
<svg style="left:44px;top:761px" width="8" height="13"><path d="M1 1L7 6.5L1 12" fill="none" stroke="#777" stroke-width="1.5"/></svg>
<svg style="left:63px;top:756px" width="24" height="24" viewBox="0 0 24 24"><clipPath id="tc16"><rect width="24" height="22" rx="3.5"/></clipPath><g clip-path="url(#tc16)"><rect x="0.00" y="5.00" width="8.30" height="5.97" fill="#e6f3fd"/><rect x="8.00" y="5.00" width="8.30" height="5.97" fill="#d9edfc"/><rect x="16.00" y="5.00" width="8.30" height="5.97" fill="#bcdffa"/><rect x="0.00" y="10.67" width="8.30" height="5.97" fill="#d2e8fb"/><rect x="8.00" y="10.67" width="8.30" height="5.97" fill="#add6f8"/><rect x="16.00" y="10.67" width="8.30" height="5.97" fill="#94caf6"/><rect x="0.00" y="16.33" width="8.30" height="5.97" fill="#c4e2f9"/><rect x="8.00" y="16.33" width="8.30" height="5.97" fill="#9bcff7"/><rect x="16.00" y="16.33" width="8.30" height="5.97" fill="#82c2f4"/><rect width="24" height="5" fill="url(#gVH)"/></g><g fill="#fff" stroke="#0f64b4" stroke-width="2.3"><circle cx="8" cy="20" r="3.4"/><circle cx="19" cy="20" r="3.4"/></g><rect x="11" y="19" width="4.5" height="2.2" fill="#0f64b4"/></svg>
<div class="t" style="left:94px;top:754px;font-size:19px;line-height:27px">视图</div>
<svg style="left:44px;top:790px" width="8" height="13"><path d="M1 1L7 6.5L1 12" fill="none" stroke="#777" stroke-width="1.5"/></svg>
<svg style="left:63px;top:785px" width="24" height="24" viewBox="0 0 24 24"><g fill="none" stroke="#2a8be0" stroke-width="2.4" stroke-linecap="round"><path d="M17.5 2.5 C13 1 10.5 3 10 7 L8.5 17.5 C8 21.5 5.5 23 2 22"/><path d="M5 9 H15.5"/></g><path d="M15.5 15 L22 21.5 M22 15 L15.5 21.5" stroke="#1a6fc7" stroke-width="2.4" stroke-linecap="round"/></svg>
<div class="t" style="left:94px;top:783px;font-size:19px;line-height:27px">函数</div>
<svg style="left:44px;top:819px" width="8" height="13"><path d="M1 1L7 6.5L1 12" fill="none" stroke="#777" stroke-width="1.5"/></svg>
<svg style="left:63px;top:814px" width="24" height="24" viewBox="0 0 24 24"><g transform="translate(8,0)"><clipPath id="tc17"><rect width="16" height="16" rx="2.5"/></clipPath><g clip-path="url(#tc17)"><rect x="0.00" y="3.50" width="5.63" height="4.47" fill="#fde6dc"/><rect x="5.33" y="3.50" width="5.63" height="4.47" fill="#fcd6c8"/><rect x="10.67" y="3.50" width="5.63" height="4.47" fill="#f9b9a3"/><rect x="0.00" y="7.67" width="5.63" height="4.47" fill="#fcd9cb"/><rect x="5.33" y="7.67" width="5.63" height="4.47" fill="#f9bba5"/><rect x="10.67" y="7.67" width="5.63" height="4.47" fill="#f6a084"/><rect x="0.00" y="11.83" width="5.63" height="4.47" fill="#fbc9b6"/><rect x="5.33" y="11.83" width="5.63" height="4.47" fill="#f7a98f"/><rect x="10.67" y="11.83" width="5.63" height="4.47" fill="#f38e6f"/><rect width="16" height="3.5" fill="url(#gRH)"/></g></g><g transform="translate(0,8)"><clipPath id="tc18"><rect width="16" height="16" rx="2.5"/></clipPath><g clip-path="url(#tc18)"><rect x="0.00" y="3.50" width="5.63" height="4.47" fill="#e6f3fd"/><rect x="5.33" y="3.50" width="5.63" height="4.47" fill="#d9edfc"/><rect x="10.67" y="3.50" width="5.63" height="4.47" fill="#bcdffa"/><rect x="0.00" y="7.67" width="5.63" height="4.47" fill="#d2e8fb"/><rect x="5.33" y="7.67" width="5.63" height="4.47" fill="#add6f8"/><rect x="10.67" y="7.67" width="5.63" height="4.47" fill="#94caf6"/><rect x="0.00" y="11.83" width="5.63" height="4.47" fill="#c4e2f9"/><rect x="5.33" y="11.83" width="5.63" height="4.47" fill="#9bcff7"/><rect x="10.67" y="11.83" width="5.63" height="4.47" fill="#82c2f4"/><rect width="16" height="3.5" fill="url(#gTH)"/></g></g></svg>
<div class="t" style="left:94px;top:812px;font-size:19px;line-height:27px">查询</div>
<svg style="left:44px;top:848px" width="8" height="13"><path d="M1 1L7 6.5L1 12" fill="none" stroke="#777" stroke-width="1.5"/></svg>
<svg style="left:63px;top:843px" width="24" height="24" viewBox="0 0 24 24"><rect x="1" y="0" width="21" height="24" rx="3" fill="#55595d"/><rect x="1" y="0" width="21" height="20.5" rx="3" fill="#6f7377"/><path d="M7.3 8.3A5.3 5.3 0 1 1 6.9 13.6" fill="none" stroke="#fff" stroke-width="2.3"/><path d="M4.3 6.3L10.3 6.5L7.1 11.5Z" fill="#fff"/></svg>
<div class="t" style="left:94px;top:841px;font-size:19px;line-height:27px">备份</div>
<svg style="left:23px;top:872px" width="24" height="24" viewBox="0 0 24 24"><rect x="0" y="0" width="24" height="24" rx="3" fill="#6e6e6e"/><path d="M18.5 3Q14 3.5 10 8.5Q6.5 13 6.2 19.5L5.6 23.2H6.6L7.3 20.5Q12 19 15 14Q18.5 8.5 18.5 3Z" fill="#fff"/><path d="M15.5 7Q10.5 12.5 7 21.5" fill="none" stroke="#6e6e6e" stroke-width=".9"/></svg>
<div class="t" style="left:54px;top:870px;font-size:19px;line-height:27px">MicroMsg</div>
<svg style="left:23px;top:901px" width="24" height="24" viewBox="0 0 24 24"><rect x="0" y="0" width="24" height="24" rx="3" fill="#6e6e6e"/><path d="M18.5 3Q14 3.5 10 8.5Q6.5 13 6.2 19.5L5.6 23.2H6.6L7.3 20.5Q12 19 15 14Q18.5 8.5 18.5 3Z" fill="#fff"/><path d="M15.5 7Q10.5 12.5 7 21.5" fill="none" stroke="#6e6e6e" stroke-width=".9"/></svg>
<div class="t" style="left:54px;top:899px;font-size:19px;line-height:27px">mymoney</div>
<div class="a" style="left:582px;top:173px;width:101px;height:36px;background:#f8f8f8;border-right:1px solid #e2e2e2;border-bottom:1px solid #e2e2e2"></div>
<div class="t" style="left:582px;width:101px;text-align:center;top:179px;font-size:19px;line-height:26px;color:#808080">对象</div>
<div class="a" style="left:684px;top:173px;width:365px;height:36px;background:#f8f8f8;border-right:1px solid #e2e2e2;border-bottom:1px solid #e2e2e2"></div>
<div class="t" style="left:718px;top:179px;font-size:18.9px;line-height:26px;color:#6b6b6b">mirrormx_customer_chat_user @jyc...</div>
<div class="t" style="left:1083px;top:179px;font-size:19.3px;line-height:26px;color:#111">wp_userinfo @jy (jy) - 表</div>
<div class="a" style="left:1414px;top:173px;width:189px;height:36px;background:#fff;border-bottom:1px solid #e2e2e2"></div>
<div class="t" style="left:616px;top:222.5px;font-size:18px;line-height:26px">开始事务</div>
<div class="t" style="left:750px;top:222.5px;font-size:18px;line-height:26px">文本</div>
<div class="t" style="left:843px;top:222.5px;font-size:18px;line-height:26px">筛选</div>
<div class="t" style="left:920px;top:222.5px;font-size:18px;line-height:26px">排序</div>
<div class="t" style="left:997px;top:222.5px;font-size:18px;line-height:26px">列</div>
<div class="t" style="left:1077px;top:222.5px;font-size:18px;line-height:26px">导入</div>
<div class="t" style="left:1154px;top:222.5px;font-size:18px;line-height:26px">导出</div>
<div class="t" style="left:1231px;top:222.5px;font-size:18px;line-height:26px">数据生成</div>
<div class="t" style="left:1344px;top:222.5px;font-size:18px;line-height:26px">创建图表</div>
<div class="a" style="left:705px;top:218px;width:1px;height:34px;background:#d8d8d8"></div>
<div class="a" style="left:1032px;top:218px;width:1px;height:34px;background:#d8d8d8"></div>
<svg style="left:797px;top:234px" width="8" height="5"><path d="M0 0H8L4 5Z" fill="#111"/></svg>
<svg style="left:589px;top:223px" width="23" height="25" viewBox="0 0 23 25"><g fill="none" stroke="#6b6b6b" stroke-width="1.3"><ellipse cx="9" cy="3.5" rx="8.3" ry="3"/><path d="M0.7 3.5V18.5Q0.7 21.5 9 21.5Q12 21.5 13.5 21"/><path d="M17.3 3.5V12"/><path d="M0.7 8.5Q0.7 11.5 9 11.5Q17.3 11.5 17.3 8.5"/><path d="M0.7 13.5Q0.7 16.5 9 16.5Q11 16.5 13 16"/></g><path d="M14.5 13.5L21.5 18.5L14.5 23.5Z" fill="#fff" stroke="#46a0e6" stroke-width="1.5" stroke-linejoin="round"/></svg>
<svg style="left:724px;top:223px" width="20" height="24" viewBox="0 0 20 24"><path d="M3 0.7H13L19.3 7V20.5Q19.3 23.3 16.5 23.3H3.5Q0.7 23.3 0.7 20.5V3.5Q0.7 0.7 3.5 0.7Z" fill="#fff" stroke="#6b6b6b" stroke-width="1.3"/><path d="M13 0.7V5Q13 7 15 7H19.3" fill="none" stroke="#6b6b6b" stroke-width="1.3"/><path d="M4 9.6H15M4 13.7H11M4 18H15" stroke="#3aa6e0" stroke-width="1.5"/></svg>
<svg style="left:816px;top:224px" width="21" height="23" viewBox="0 0 21 23"><path d="M2 0.7H19Q20.5 0.7 20.3 2.5L19.5 6Q18.8 8 17 10L13.5 14V21.5L9.5 19V14L4 10Q2.2 8 1.5 6L0.7 2.5Q0.5 0.7 2 0.7Z" fill="#fff" stroke="#6b6b6b" stroke-width="1.3" stroke-linejoin="round"/><path d="M2.5 3.5H17" stroke="#3aa6e0" stroke-width="1.5"/></svg>
<svg style="left:893px;top:223px" width="23" height="23" viewBox="0 0 23 23"><path d="M4.5 0V21.5M0.8 17.5L4.5 21.7L8.2 17.5" fill="none" stroke="#3a95d8" stroke-width="1.4"/><path d="M13 2H22M13 8H22M13 14H22M13 19.6H22" stroke="#8c8c8c" stroke-width="1.1"/></svg>
<svg style="left:969px;top:223px" width="24" height="24" viewBox="0 0 24 24"><path d="M8.5 1V23M16 1V23M1 8.3H23M1 16.3H23" stroke="#3aa6e0" stroke-width="1.4"/><rect x="0.7" y="0.7" width="22.6" height="22.6" rx="2.5" fill="none" stroke="#6b6b6b" stroke-width="1.3"/></svg>
<svg style="left:1050px;top:224px" width="23" height="23" viewBox="0 0 23 23"><path d="M8 20.5H3Q0.7 20.5 0.7 18V3.5Q0.7 0.7 3.5 0.7H14.5Q17.3 0.7 17.3 3.5V7" fill="none" stroke="#6b6b6b" stroke-width="1.3"/><path d="M21 22Q21 14 13 14H9" fill="none" stroke="#4cbb2a" stroke-width="2.2" stroke-linecap="round"/><path d="M12.5 10L8 14L12.5 18" fill="none" stroke="#4cbb2a" stroke-width="2.2" stroke-linecap="round" stroke-linejoin="round"/></svg>
<svg style="left:1127px;top:224px" width="23" height="23" viewBox="0 0 23 23"><path d="M6 20.5H3Q0.7 20.5 0.7 18V3.5Q0.7 0.7 3.5 0.7H14.5Q17.3 0.7 17.3 3.5V7" fill="none" stroke="#6b6b6b" stroke-width="1.3"/><path d="M9.5 10Q10 17 16 17H20" fill="none" stroke="#f0a020" stroke-width="2.2" stroke-linecap="round"/><path d="M17 13L21.5 17L17 21" fill="none" stroke="#f0a020" stroke-width="2.2" stroke-linecap="round" stroke-linejoin="round"/></svg>
<svg style="left:1203px;top:223px" width="24" height="24" viewBox="0 0 24 24"><g fill="none" stroke="#6b6b6b" stroke-width="1.2"><ellipse cx="9" cy="3.5" rx="8.3" ry="3"/><path d="M0.7 3.5V19Q0.7 22 7 22.3"/><path d="M17.3 3.5V7"/><path d="M0.7 9Q0.7 12 7 12.3"/><path d="M0.7 14Q0.7 17 7 17.3"/></g><rect x="7" y="7" width="17" height="17" rx="3" fill="#1f8ae3"/><text x="15.5" y="14.6" font-size="7.4" font-family="Liberation Sans" font-weight="bold" fill="#fff" text-anchor="middle">101</text><text x="15.5" y="22.2" font-size="7" font-family="Liberation Sans" font-weight="bold" fill="#fff" text-anchor="middle">ABC</text></svg>
<svg style="left:1316px;top:223px" width="24" height="24" viewBox="0 0 24 24"><g fill="#d9f3fd" stroke="#3f92d2" stroke-width="1.2"><rect x="0.6" y="6" width="4.4" height="13.6" rx="2.2"/><rect x="6.6" y="0.6" width="4.4" height="16" rx="2.2"/><rect x="12.6" y="9.4" width="4.4" height="14" rx="2.2"/><rect x="18.6" y="5.6" width="4.4" height="14" rx="2.2"/></g></svg>
<svg style="left:689px;top:180px" width="24" height="24" viewBox="0 0 24 24"><clipPath id="tc19"><rect width="24" height="24" rx="3.5"/></clipPath><g clip-path="url(#tc19)"><rect x="0.00" y="5.50" width="8.30" height="6.47" fill="#e6f3fd"/><rect x="8.00" y="5.50" width="8.30" height="6.47" fill="#d9edfc"/><rect x="16.00" y="5.50" width="8.30" height="6.47" fill="#bcdffa"/><rect x="0.00" y="11.67" width="8.30" height="6.47" fill="#d2e8fb"/><rect x="8.00" y="11.67" width="8.30" height="6.47" fill="#add6f8"/><rect x="16.00" y="11.67" width="8.30" height="6.47" fill="#94caf6"/><rect x="0.00" y="17.83" width="8.30" height="6.47" fill="#c4e2f9"/><rect x="8.00" y="17.83" width="8.30" height="6.47" fill="#9bcff7"/><rect x="16.00" y="17.83" width="8.30" height="6.47" fill="#82c2f4"/><rect width="24" height="5.5" fill="url(#gTH)"/></g></svg>
<svg style="left:1054px;top:180px" width="24" height="24" viewBox="0 0 24 24"><clipPath id="tc20"><rect width="24" height="24" rx="3.5"/></clipPath><g clip-path="url(#tc20)"><rect x="0.00" y="5.50" width="8.30" height="6.47" fill="#e6f3fd"/><rect x="8.00" y="5.50" width="8.30" height="6.47" fill="#d9edfc"/><rect x="16.00" y="5.50" width="8.30" height="6.47" fill="#bcdffa"/><rect x="0.00" y="11.67" width="8.30" height="6.47" fill="#d2e8fb"/><rect x="8.00" y="11.67" width="8.30" height="6.47" fill="#add6f8"/><rect x="16.00" y="11.67" width="8.30" height="6.47" fill="#94caf6"/><rect x="0.00" y="17.83" width="8.30" height="6.47" fill="#c4e2f9"/><rect x="8.00" y="17.83" width="8.30" height="6.47" fill="#9bcff7"/><rect x="16.00" y="17.83" width="8.30" height="6.47" fill="#82c2f4"/><rect width="24" height="5.5" fill="url(#gTH)"/></g></svg>
<div class="a" style="left:581px;top:254px;width:996px;height:764px;background:#fff"></div>
<div class="a" style="left:872px;top:254px;width:226px;height:28px;background:#d9e8f6"></div>
<div class="t" style="left:605px;top:256px;font-size:19.4px;line-height:26px">uid</div>
<div class="t" style="left:710px;top:256px;font-size:19.4px;line-height:26px">username</div>
<div class="t" style="left:880px;top:256px;font-size:19.4px;line-height:26px">upwd</div>
<div class="t" style="left:1106px;top:256px;font-size:19.4px;line-height:26px">epwd</div>
<div class="t" style="left:1332px;top:256px;font-size:19.4px;line-height:26px">utel</div>
<div class="t" style="left:1497px;top:256px;font-size:19.4px;line-height:26px">utime</div>
<div class="a" style="left:581px;top:283px;width:16px;height:30px;background:#dce9f8;border-bottom:1px solid #d6d6d6"></div>
<div class="a" style="left:597px;top:283px;width:980px;height:30px;background:#dce9f8;border-bottom:1px solid #ececec"></div>
<div class="t" style="left:597px;width:95px;text-align:right;top:284px;font-size:19.7px;line-height:27px">1001</div>
<div class="t" style="left:710px;width:156px;overflow:hidden;top:284px;font-size:19.7px;line-height:27px;color:#1a1a1a">admin</div>
<div class="t" style="left:880px;width:212px;overflow:hidden;top:284px;font-size:19.7px;line-height:27px;color:#1a1a1a">fb2061979469f89c085f2a3b</div>
<div class="t" style="left:1106px;width:212px;overflow:hidden;top:284px;font-size:19.7px;line-height:27px;color:#bdbdbd">(Null)</div>
<div class="t" style="left:1332px;width:151px;overflow:hidden;top:284px;font-size:19.7px;line-height:27px;color:#1a1a1a">15862772093</div>
<div class="t" style="left:1497px;width:79px;overflow:hidden;top:284px;font-size:19.7px;line-height:27px;color:#1a1a1a">1480061000</div>
<div class="a" style="left:581px;top:313px;width:16px;height:30px;background:#fff;border-bottom:1px solid #d6d6d6"></div>
<div class="a" style="left:597px;top:313px;width:980px;height:30px;background:#fff;border-bottom:1px solid #ececec"></div>
<div class="t" style="left:597px;width:95px;text-align:right;top:314px;font-size:19.7px;line-height:27px">1002</div>
<div class="t" style="left:710px;width:156px;overflow:hidden;top:314px;font-size:19.7px;line-height:27px;color:#1a1a1a">tester</div>
<div class="t" style="left:880px;width:212px;overflow:hidden;top:314px;font-size:19.7px;line-height:27px;color:#1a1a1a">713e978fc11b54a003a0</div>
<div class="t" style="left:1106px;width:212px;overflow:hidden;top:314px;font-size:19.7px;line-height:27px;color:#1a1a1a">d0970714757783e6cf17b2</div>
<div class="t" style="left:1332px;width:151px;overflow:hidden;top:314px;font-size:19.7px;line-height:27px;color:#1a1a1a">17531171414</div>
<div class="t" style="left:1497px;width:79px;overflow:hidden;top:314px;font-size:19.7px;line-height:27px;color:#1a1a1a">1634288400</div>
<div class="a" style="left:581px;top:343px;width:16px;height:30px;background:#fff;border-bottom:1px solid #d6d6d6"></div>
<div class="a" style="left:597px;top:343px;width:980px;height:30px;background:#f6f6f6;border-bottom:1px solid #ececec"></div>
<div class="t" style="left:597px;width:95px;text-align:right;top:344px;font-size:19.7px;line-height:27px">1003</div>
<div class="t" style="left:710px;width:156px;overflow:hidden;top:344px;font-size:19.7px;line-height:27px;color:#1a1a1a">feng123</div>
<div class="t" style="left:880px;width:212px;overflow:hidden;top:344px;font-size:19.7px;line-height:27px;color:#1a1a1a">713e978fc11b54a003a0</div>
<div class="t" style="left:1106px;width:212px;overflow:hidden;top:344px;font-size:19.7px;line-height:27px;color:#1a1a1a">4297f44b13955235245b2497</div>
<div class="t" style="left:1332px;width:151px;overflow:hidden;top:344px;font-size:19.7px;line-height:27px;color:#1a1a1a">16327308307</div>
<div class="t" style="left:1497px;width:79px;overflow:hidden;top:344px;font-size:19.7px;line-height:27px;color:#1a1a1a">1653879900</div>
<div class="a" style="left:581px;top:373px;width:16px;height:30px;background:#fff;border-bottom:1px solid #d6d6d6"></div>
<div class="a" style="left:597px;top:373px;width:980px;height:30px;background:#fff;border-bottom:1px solid #ececec"></div>
<div class="t" style="left:597px;width:95px;text-align:right;top:374px;font-size:19.7px;line-height:27px">1004</div>
<div class="t" style="left:710px;width:156px;overflow:hidden;top:374px;font-size:19.7px;line-height:27px;color:#1a1a1a">xili</div>
<div class="t" style="left:880px;width:212px;overflow:hidden;top:374px;font-size:19.7px;line-height:27px;color:#1a1a1a">713e978fc11b54a003a0</div>
<div class="t" style="left:1106px;width:212px;overflow:hidden;top:374px;font-size:19.7px;line-height:27px;color:#1a1a1a">713e978fc11b54a003a0</div>
<div class="t" style="left:1332px;width:151px;overflow:hidden;top:374px;font-size:19.7px;line-height:27px;color:#1a1a1a">17438315391</div>
<div class="t" style="left:1497px;width:79px;overflow:hidden;top:374px;font-size:19.7px;line-height:27px;color:#1a1a1a">1653898000</div>
<div class="a" style="left:581px;top:403px;width:16px;height:30px;background:#fff;border-bottom:1px solid #d6d6d6"></div>
<div class="a" style="left:597px;top:403px;width:980px;height:30px;background:#fff;border-bottom:1px solid #ececec"></div>
<div class="t" style="left:597px;width:95px;text-align:right;top:404px;font-size:19.7px;line-height:27px">1005</div>
<div class="t" style="left:710px;width:156px;overflow:hidden;top:404px;font-size:19.7px;line-height:27px;color:#1a1a1a">daili001</div>
<div class="t" style="left:880px;width:212px;overflow:hidden;top:404px;font-size:19.7px;line-height:27px;color:#1a1a1a">713e978fc11b54a003a0</div>
<div class="t" style="left:1106px;width:212px;overflow:hidden;top:404px;font-size:19.7px;line-height:27px;color:#bdbdbd">(Null)</div>
<div class="t" style="left:1332px;width:151px;overflow:hidden;top:404px;font-size:19.7px;line-height:27px;color:#1a1a1a">13382217954</div>
<div class="t" style="left:1497px;width:79px;overflow:hidden;top:404px;font-size:19.7px;line-height:27px;color:#1a1a1a">1654170200</div>
<div class="a" style="left:581px;top:433px;width:16px;height:30px;background:#fff;border-bottom:1px solid #d6d6d6"></div>
<div class="a" style="left:597px;top:433px;width:980px;height:30px;background:#f2f7fd;border-bottom:1px solid #ececec"></div>
<div class="t" style="left:597px;width:95px;text-align:right;top:434px;font-size:19.7px;line-height:27px">1006</div>
<div class="t" style="left:710px;width:156px;overflow:hidden;top:434px;font-size:19.7px;line-height:27px;color:#1a1a1a">us001</div>
<div class="t" style="left:880px;width:212px;overflow:hidden;top:434px;font-size:19.7px;line-height:27px;color:#1a1a1a">713e978fc11b54a003a0</div>
<div class="t" style="left:1106px;width:212px;overflow:hidden;top:434px;font-size:19.7px;line-height:27px;color:#bdbdbd">(Null)</div>
<div class="t" style="left:1332px;width:151px;overflow:hidden;top:434px;font-size:19.7px;line-height:27px;color:#1a1a1a">19317302880</div>
<div class="t" style="left:1497px;width:79px;overflow:hidden;top:434px;font-size:19.7px;line-height:27px;color:#1a1a1a">1654170900</div>
<div class="a" style="left:581px;top:463px;width:16px;height:30px;background:#fff;border-bottom:1px solid #d6d6d6"></div>
<div class="a" style="left:597px;top:463px;width:980px;height:30px;background:#fff;border-bottom:1px solid #ececec"></div>
<div class="t" style="left:597px;width:95px;text-align:right;top:464px;font-size:19.7px;line-height:27px">1007</div>
<div class="t" style="left:710px;width:156px;overflow:hidden;top:464px;font-size:19.7px;line-height:27px;color:#1a1a1a">lihong</div>
<div class="t" style="left:880px;width:212px;overflow:hidden;top:464px;font-size:19.7px;line-height:27px;color:#1a1a1a">fb2061979469f89c085f2a3b</div>
<div class="t" style="left:1106px;width:212px;overflow:hidden;top:464px;font-size:19.7px;line-height:27px;color:#bdbdbd">(Null)</div>
<div class="t" style="left:1332px;width:151px;overflow:hidden;top:464px;font-size:19.7px;line-height:27px;color:#1a1a1a">18588793411</div>
<div class="t" style="left:1497px;width:79px;overflow:hidden;top:464px;font-size:19.7px;line-height:27px;color:#1a1a1a">1654219200</div>
<div class="a" style="left:581px;top:493px;width:16px;height:30px;background:#fff;border-bottom:1px solid #d6d6d6"></div>
<div class="a" style="left:597px;top:493px;width:980px;height:30px;background:#fff;border-bottom:1px solid #ececec"></div>
<div class="t" style="left:597px;width:95px;text-align:right;top:494px;font-size:19.7px;line-height:27px">1008</div>
<div class="t" style="left:710px;width:156px;overflow:hidden;top:494px;font-size:19.7px;line-height:27px;color:#1a1a1a">liuhe123</div>
<div class="t" style="left:880px;width:212px;overflow:hidden;top:494px;font-size:19.7px;line-height:27px;color:#1a1a1a">0f9b71a6edd2e5b863799</div>
<div class="t" style="left:1106px;width:212px;overflow:hidden;top:494px;font-size:19.7px;line-height:27px;color:#1a1a1a">da0ba1d588a971a24ffac</div>
<div class="t" style="left:1332px;width:151px;overflow:hidden;top:494px;font-size:19.7px;line-height:27px;color:#1a1a1a">17331349172</div>
<div class="t" style="left:1497px;width:79px;overflow:hidden;top:494px;font-size:19.7px;line-height:27px;color:#1a1a1a">1654238700</div>
<div class="a" style="left:581px;top:523px;width:16px;height:30px;background:#fff;border-bottom:1px solid #d6d6d6"></div>
<div class="a" style="left:597px;top:523px;width:980px;height:30px;background:#f6f6f6;border-bottom:1px solid #ececec"></div>
<div class="t" style="left:597px;width:95px;text-align:right;top:524px;font-size:19.7px;line-height:27px">1009</div>
<div class="t" style="left:710px;width:156px;overflow:hidden;top:524px;font-size:19.7px;line-height:27px;color:#1a1a1a">zhangjw001</div>
<div class="t" style="left:880px;width:212px;overflow:hidden;top:524px;font-size:19.7px;line-height:27px;color:#1a1a1a">fb2061979469f89c085f2a3b</div>
<div class="t" style="left:1106px;width:212px;overflow:hidden;top:524px;font-size:19.7px;line-height:27px;color:#1a1a1a">77b3e6926e7295494dd</div>
<div class="t" style="left:1332px;width:151px;overflow:hidden;top:524px;font-size:19.7px;line-height:27px;color:#1a1a1a">16996493859</div>
<div class="t" style="left:1497px;width:79px;overflow:hidden;top:524px;font-size:19.7px;line-height:27px;color:#1a1a1a">1654246000</div>
<div class="a" style="left:581px;top:553px;width:16px;height:30px;background:#fff;border-bottom:1px solid #d6d6d6"></div>
<div class="a" style="left:597px;top:553px;width:980px;height:30px;background:#fff;border-bottom:1px solid #ececec"></div>
<div class="t" style="left:597px;width:95px;text-align:right;top:554px;font-size:19.7px;line-height:27px">1010</div>
<div class="t" style="left:710px;width:156px;overflow:hidden;top:554px;font-size:19.7px;line-height:27px;color:#1a1a1a">wendyNan009</div>
<div class="t" style="left:880px;width:212px;overflow:hidden;top:554px;font-size:19.7px;line-height:27px;color:#1a1a1a">fb2061979469f89c085f2a3b</div>
<div class="t" style="left:1106px;width:212px;overflow:hidden;top:554px;font-size:19.7px;line-height:27px;color:#1a1a1a">713e978fc11b54a003a0</div>
<div class="t" style="left:1332px;width:151px;overflow:hidden;top:554px;font-size:19.7px;line-height:27px;color:#1a1a1a">13951241045</div>
<div class="t" style="left:1497px;width:79px;overflow:hidden;top:554px;font-size:19.7px;line-height:27px;color:#1a1a1a">1654246700</div>
<div class="a" style="left:581px;top:583px;width:16px;height:30px;background:#fff;border-bottom:1px solid #d6d6d6"></div>
<div class="a" style="left:597px;top:583px;width:980px;height:30px;background:#fff;border-bottom:1px solid #ececec"></div>
<div class="t" style="left:597px;width:95px;text-align:right;top:584px;font-size:19.7px;line-height:27px">1011</div>
<div class="t" style="left:710px;width:156px;overflow:hidden;top:584px;font-size:19.7px;line-height:27px;color:#1a1a1a">Angel1109</div>
<div class="t" style="left:880px;width:212px;overflow:hidden;top:584px;font-size:19.7px;line-height:27px;color:#1a1a1a">0192023a7bbd7325051</div>
<div class="t" style="left:1106px;width:212px;overflow:hidden;top:584px;font-size:19.7px;line-height:27px;color:#1a1a1a">713e978fc11b54a003a0</div>
<div class="t" style="left:1332px;width:151px;overflow:hidden;top:584px;font-size:19.7px;line-height:27px;color:#1a1a1a">16105135402</div>
<div class="t" style="left:1497px;width:79px;overflow:hidden;top:584px;font-size:19.7px;line-height:27px;color:#1a1a1a">1654246800</div>
<div class="a" style="left:581px;top:613px;width:16px;height:30px;background:#fff;border-bottom:1px solid #d6d6d6"></div>
<div class="a" style="left:597px;top:613px;width:980px;height:30px;background:#f2f7fd;border-bottom:1px solid #ececec"></div>
<div class="t" style="left:597px;width:95px;text-align:right;top:614px;font-size:19.7px;line-height:27px">1012</div>
<div class="t" style="left:710px;width:156px;overflow:hidden;top:614px;font-size:19.7px;line-height:27px;color:#1a1a1a">slkdjaosnon</div>
<div class="t" style="left:880px;width:212px;overflow:hidden;top:614px;font-size:19.7px;line-height:27px;color:#1a1a1a">0192023a7bbd7325051</div>
<div class="t" style="left:1106px;width:212px;overflow:hidden;top:614px;font-size:19.7px;line-height:27px;color:#1a1a1a">713e978fc11b54a003a0</div>
<div class="t" style="left:1332px;width:151px;overflow:hidden;top:614px;font-size:19.7px;line-height:27px;color:#1a1a1a">16436403521</div>
<div class="t" style="left:1497px;width:79px;overflow:hidden;top:614px;font-size:19.7px;line-height:27px;color:#1a1a1a">1654246800</div>
<div class="a" style="left:581px;top:643px;width:16px;height:30px;background:#fff;border-bottom:1px solid #d6d6d6"></div>
<div class="a" style="left:597px;top:643px;width:980px;height:30px;background:#fff;border-bottom:1px solid #ececec"></div>
<div class="t" style="left:597px;width:95px;text-align:right;top:644px;font-size:19.7px;line-height:27px">1013</div>
<div class="t" style="left:710px;width:156px;overflow:hidden;top:644px;font-size:19.7px;line-height:27px;color:#1a1a1a">zhengnini</div>
<div class="t" style="left:880px;width:212px;overflow:hidden;top:644px;font-size:19.7px;line-height:27px;color:#1a1a1a">fb2061979469f89c085f2a3b</div>
<div class="t" style="left:1106px;width:212px;overflow:hidden;top:644px;font-size:19.7px;line-height:27px;color:#1a1a1a">77b3e6926e7295494dd</div>
<div class="t" style="left:1332px;width:151px;overflow:hidden;top:644px;font-size:19.7px;line-height:27px;color:#1a1a1a">14345448565</div>
<div class="t" style="left:1497px;width:79px;overflow:hidden;top:644px;font-size:19.7px;line-height:27px;color:#1a1a1a">1654246800</div>
<div class="a" style="left:581px;top:673px;width:16px;height:30px;background:#fff;border-bottom:1px solid #d6d6d6"></div>
<div class="a" style="left:597px;top:673px;width:980px;height:30px;background:#fff;border-bottom:1px solid #ececec"></div>
<div class="t" style="left:597px;width:95px;text-align:right;top:674px;font-size:19.7px;line-height:27px">1014</div>
<div class="t" style="left:710px;width:156px;overflow:hidden;top:674px;font-size:19.7px;line-height:27px;color:#1a1a1a">masterHong9</div>
<div class="t" style="left:880px;width:212px;overflow:hidden;top:674px;font-size:19.7px;line-height:27px;color:#1a1a1a">0192023a7bbd7325051</div>
<div class="t" style="left:1106px;width:212px;overflow:hidden;top:674px;font-size:19.7px;line-height:27px;color:#1a1a1a">713e978fc11b54a003a0</div>
<div class="t" style="left:1332px;width:151px;overflow:hidden;top:674px;font-size:19.7px;line-height:27px;color:#1a1a1a">16635891317</div>
<div class="t" style="left:1497px;width:79px;overflow:hidden;top:674px;font-size:19.7px;line-height:27px;color:#1a1a1a">1654246800</div>
<div class="a" style="left:581px;top:703px;width:16px;height:30px;background:#fff;border-bottom:1px solid #d6d6d6"></div>
<div class="a" style="left:597px;top:703px;width:980px;height:30px;background:#f6f6f6;border-bottom:1px solid #ececec"></div>
<div class="t" style="left:597px;width:95px;text-align:right;top:704px;font-size:19.7px;line-height:27px">1015</div>
<div class="t" style="left:710px;width:156px;overflow:hidden;top:704px;font-size:19.7px;line-height:27px;color:#1a1a1a">WangXiuL09</div>
<div class="t" style="left:880px;width:212px;overflow:hidden;top:704px;font-size:19.7px;line-height:27px;color:#1a1a1a">fb2061979469f89c085f2a3b</div>
<div class="t" style="left:1106px;width:212px;overflow:hidden;top:704px;font-size:19.7px;line-height:27px;color:#1a1a1a">713e978fc11b54a003a0</div>
<div class="t" style="left:1332px;width:151px;overflow:hidden;top:704px;font-size:19.7px;line-height:27px;color:#1a1a1a">14972898215</div>
<div class="t" style="left:1497px;width:79px;overflow:hidden;top:704px;font-size:19.7px;line-height:27px;color:#1a1a1a">1654246900</div>
<div class="a" style="left:581px;top:733px;width:16px;height:30px;background:#fff;border-bottom:1px solid #d6d6d6"></div>
<div class="a" style="left:597px;top:733px;width:980px;height:30px;background:#fff;border-bottom:1px solid #ececec"></div>
<div class="t" style="left:597px;width:95px;text-align:right;top:734px;font-size:19.7px;line-height:27px">1016</div>
<div class="t" style="left:710px;width:156px;overflow:hidden;top:734px;font-size:19.7px;line-height:27px;color:#1a1a1a">HZH007</div>
<div class="t" style="left:880px;width:212px;overflow:hidden;top:734px;font-size:19.7px;line-height:27px;color:#1a1a1a">fb2061979469f89c085f2a3b</div>
<div class="t" style="left:1106px;width:212px;overflow:hidden;top:734px;font-size:19.7px;line-height:27px;color:#1a1a1a">77b3e6926e7295494dd</div>
<div class="t" style="left:1332px;width:151px;overflow:hidden;top:734px;font-size:19.7px;line-height:27px;color:#1a1a1a">16762044508</div>
<div class="t" style="left:1497px;width:79px;overflow:hidden;top:734px;font-size:19.7px;line-height:27px;color:#1a1a1a">1654247000</div>
<div class="a" style="left:581px;top:763px;width:16px;height:30px;background:#fff;border-bottom:1px solid #d6d6d6"></div>
<div class="a" style="left:597px;top:763px;width:980px;height:30px;background:#fff;border-bottom:1px solid #ececec"></div>
<div class="t" style="left:597px;width:95px;text-align:right;top:764px;font-size:19.7px;line-height:27px">1017</div>
<div class="t" style="left:710px;width:156px;overflow:hidden;top:764px;font-size:19.7px;line-height:27px;color:#1a1a1a">XuYuePing11</div>
<div class="t" style="left:880px;width:212px;overflow:hidden;top:764px;font-size:19.7px;line-height:27px;color:#1a1a1a">fb2061979469f89c085f2a3b</div>
<div class="t" style="left:1106px;width:212px;overflow:hidden;top:764px;font-size:19.7px;line-height:27px;color:#1a1a1a">713e978fc11b54a003a0</div>
<div class="t" style="left:1332px;width:151px;overflow:hidden;top:764px;font-size:19.7px;line-height:27px;color:#1a1a1a">14722762007</div>
<div class="t" style="left:1497px;width:79px;overflow:hidden;top:764px;font-size:19.7px;line-height:27px;color:#1a1a1a">1654247400</div>
<div class="a" style="left:581px;top:793px;width:16px;height:30px;background:#fff;border-bottom:1px solid #d6d6d6"></div>
<div class="a" style="left:597px;top:793px;width:980px;height:30px;background:#f2f7fd;border-bottom:1px solid #ececec"></div>
<div class="t" style="left:597px;width:95px;text-align:right;top:794px;font-size:19.7px;line-height:27px">1018</div>
<div class="t" style="left:710px;width:156px;overflow:hidden;top:794px;font-size:19.7px;line-height:27px;color:#1a1a1a">Bert1234</div>
<div class="t" style="left:880px;width:212px;overflow:hidden;top:794px;font-size:19.7px;line-height:27px;color:#1a1a1a">fb2061979469f89c085f2a3b</div>
<div class="t" style="left:1106px;width:212px;overflow:hidden;top:794px;font-size:19.7px;line-height:27px;color:#1a1a1a">713e978fc11b54a003a0</div>
<div class="t" style="left:1332px;width:151px;overflow:hidden;top:794px;font-size:19.7px;line-height:27px;color:#1a1a1a">15874077831</div>
<div class="t" style="left:1497px;width:79px;overflow:hidden;top:794px;font-size:19.7px;line-height:27px;color:#1a1a1a">1654247900</div>
<div class="a" style="left:581px;top:823px;width:16px;height:30px;background:#fff;border-bottom:1px solid #d6d6d6"></div>
<div class="a" style="left:597px;top:823px;width:980px;height:30px;background:#fff;border-bottom:1px solid #ececec"></div>
<div class="t" style="left:597px;width:95px;text-align:right;top:824px;font-size:19.7px;line-height:27px">1019</div>
<div class="t" style="left:710px;width:156px;overflow:hidden;top:824px;font-size:19.7px;line-height:27px;color:#1a1a1a">Tong998</div>
<div class="t" style="left:880px;width:212px;overflow:hidden;top:824px;font-size:19.7px;line-height:27px;color:#1a1a1a">fb2061979469f89c085f2a3b</div>
<div class="t" style="left:1106px;width:212px;overflow:hidden;top:824px;font-size:19.7px;line-height:27px;color:#1a1a1a">77b3e6926e7295494dd</div>
<div class="t" style="left:1332px;width:151px;overflow:hidden;top:824px;font-size:19.7px;line-height:27px;color:#1a1a1a">13102621007</div>
<div class="t" style="left:1497px;width:79px;overflow:hidden;top:824px;font-size:19.7px;line-height:27px;color:#1a1a1a">1654248000</div>
<div class="a" style="left:581px;top:853px;width:16px;height:30px;background:#fff;border-bottom:1px solid #d6d6d6"></div>
<div class="a" style="left:597px;top:853px;width:980px;height:30px;background:#fff;border-bottom:1px solid #ececec"></div>
<div class="t" style="left:597px;width:95px;text-align:right;top:854px;font-size:19.7px;line-height:27px">1020</div>
<div class="t" style="left:710px;width:156px;overflow:hidden;top:854px;font-size:19.7px;line-height:27px;color:#1a1a1a">LinWWW</div>
<div class="t" style="left:880px;width:212px;overflow:hidden;top:854px;font-size:19.7px;line-height:27px;color:#1a1a1a">fb2061979469f89c085f2a3b</div>
<div class="t" style="left:1106px;width:212px;overflow:hidden;top:854px;font-size:19.7px;line-height:27px;color:#1a1a1a">713e978fc11b54a003a0</div>
<div class="t" style="left:1332px;width:151px;overflow:hidden;top:854px;font-size:19.7px;line-height:27px;color:#1a1a1a">15083098943</div>
<div class="t" style="left:1497px;width:79px;overflow:hidden;top:854px;font-size:19.7px;line-height:27px;color:#1a1a1a">1654248200</div>
<div class="a" style="left:581px;top:883px;width:16px;height:30px;background:#fff;border-bottom:1px solid #d6d6d6"></div>
<div class="a" style="left:597px;top:883px;width:980px;height:30px;background:#f6f6f6;border-bottom:1px solid #ececec"></div>
<div class="t" style="left:597px;width:95px;text-align:right;top:884px;font-size:19.7px;line-height:27px">1021</div>
<div class="t" style="left:710px;width:156px;overflow:hidden;top:884px;font-size:19.7px;line-height:27px;color:#1a1a1a">YIYI987</div>
<div class="t" style="left:880px;width:212px;overflow:hidden;top:884px;font-size:19.7px;line-height:27px;color:#1a1a1a">fb2061979469f89c085f2a3b</div>
<div class="t" style="left:1106px;width:212px;overflow:hidden;top:884px;font-size:19.7px;line-height:27px;color:#1a1a1a">713e978fc11b54a003a0</div>
<div class="t" style="left:1332px;width:151px;overflow:hidden;top:884px;font-size:19.7px;line-height:27px;color:#1a1a1a">18655291131</div>
<div class="t" style="left:1497px;width:79px;overflow:hidden;top:884px;font-size:19.7px;line-height:27px;color:#1a1a1a">1654248000</div>
<div class="a" style="left:581px;top:913px;width:16px;height:30px;background:#fff;border-bottom:1px solid #d6d6d6"></div>
<div class="a" style="left:597px;top:913px;width:980px;height:30px;background:#fff;border-bottom:1px solid #ececec"></div>
<div class="t" style="left:597px;width:95px;text-align:right;top:914px;font-size:19.7px;line-height:27px">1022</div>
<div class="t" style="left:710px;width:156px;overflow:hidden;top:914px;font-size:19.7px;line-height:27px;color:#1a1a1a">tokertoker</div>
<div class="t" style="left:880px;width:212px;overflow:hidden;top:914px;font-size:19.7px;line-height:27px;color:#1a1a1a">fb2061979469f89c085f2a3b</div>
<div class="t" style="left:1106px;width:212px;overflow:hidden;top:914px;font-size:19.7px;line-height:27px;color:#1a1a1a">713e978fc11b54a003a0</div>
<div class="t" style="left:1332px;width:151px;overflow:hidden;top:914px;font-size:19.7px;line-height:27px;color:#1a1a1a">18702641281</div>
<div class="t" style="left:1497px;width:79px;overflow:hidden;top:914px;font-size:19.7px;line-height:27px;color:#1a1a1a">1654248400</div>
<div class="a" style="left:581px;top:943px;width:16px;height:30px;background:#fff;border-bottom:1px solid #d6d6d6"></div>
<div class="a" style="left:597px;top:943px;width:980px;height:30px;background:#fff;border-bottom:1px solid #ececec"></div>
<div class="t" style="left:597px;width:95px;text-align:right;top:944px;font-size:19.7px;line-height:27px">1023</div>
<div class="t" style="left:710px;width:156px;overflow:hidden;top:944px;font-size:19.7px;line-height:27px;color:#1a1a1a">zhaoGL678</div>
<div class="t" style="left:880px;width:212px;overflow:hidden;top:944px;font-size:19.7px;line-height:27px;color:#1a1a1a">0192023a7bbd7325051</div>
<div class="t" style="left:1106px;width:212px;overflow:hidden;top:944px;font-size:19.7px;line-height:27px;color:#1a1a1a">713e978fc11b54a003a0</div>
<div class="t" style="left:1332px;width:151px;overflow:hidden;top:944px;font-size:19.7px;line-height:27px;color:#1a1a1a">15452564451</div>
<div class="t" style="left:1497px;width:79px;overflow:hidden;top:944px;font-size:19.7px;line-height:27px;color:#1a1a1a">1654248900</div>
<div class="a" style="left:581px;top:973px;width:16px;height:30px;background:#fff;border-bottom:1px solid #d6d6d6"></div>
<div class="a" style="left:597px;top:973px;width:980px;height:30px;background:#f2f7fd;border-bottom:1px solid #ececec"></div>
<div class="t" style="left:597px;width:95px;text-align:right;top:974px;font-size:19.7px;line-height:27px">1024</div>
<div class="t" style="left:710px;width:156px;overflow:hidden;top:974px;font-size:19.7px;line-height:27px;color:#1a1a1a">xielili</div>
<div class="t" style="left:880px;width:212px;overflow:hidden;top:974px;font-size:19.7px;line-height:27px;color:#1a1a1a">0192023a7bbd7325051</div>
<div class="t" style="left:1106px;width:212px;overflow:hidden;top:974px;font-size:19.7px;line-height:27px;color:#1a1a1a">713e978fc11b54a003a0</div>
<div class="t" style="left:1332px;width:151px;overflow:hidden;top:974px;font-size:19.7px;line-height:27px;color:#1a1a1a">18274953314</div>
<div class="t" style="left:1497px;width:79px;overflow:hidden;top:974px;font-size:19.7px;line-height:27px;color:#1a1a1a">1654249000</div>
<div class="a" style="left:702px;top:254px;width:1px;height:749px;background:#ececec"></div>
<div class="a" style="left:872px;top:254px;width:1px;height:749px;background:#ececec"></div>
<div class="a" style="left:1098px;top:254px;width:1px;height:749px;background:#ececec"></div>
<div class="a" style="left:1324px;top:254px;width:1px;height:749px;background:#ececec"></div>
<div class="a" style="left:1489px;top:254px;width:1px;height:749px;background:#ececec"></div>
<div class="a" style="left:597px;top:254px;width:1px;height:749px;background:#d6d6d6"></div>
<div class="a" style="left:581px;top:281px;width:996px;height:1px;background:#e6e6e6"></div>
<svg style="left:586px;top:290px" width="9" height="14"><path d="M0 0L9 7L0 14Z" fill="#111"/></svg>
<div class="a" style="left:871px;top:281px;width:229px;height:33px;border:2px solid #1a73c8;background:#fff"></div>
<div class="a" style="left:880px;top:285px;width:209px;height:24px;background:#0a63c9"></div>
<div class="t" style="left:880px;width:209px;overflow:hidden;top:284px;font-size:19.7px;line-height:27px;color:#fff">fb2061979469f89c085f2a3b</div>
<div class="a" style="left:1584px;top:280px;width:11px;height:41px;background:#878787"></div>
<div class="a" style="left:607px;top:1025px;width:190px;height:12px;background:#878787"></div>
<div class="a" style="left:1375px;top:1049px;width:35px;height:27px;background:#fff"></div><div class="t" style="left:1375px;top:1048px;width:35px;text-align:center;font-size:19.5px;line-height:27px">1</div>
<div class="a" style="left:1532px;top:1044px;width:35px;height:31px;background:#cce4f7;border:1px solid #a9d2f3;border-radius:3px"></div>
<div class="a" style="left:1522px;top:1048px;width:1px;height:22px;background:#d0d0d0"></div>
<svg style="left:587px;top:1052px" width="16" height="16" viewBox="0 0 16 16"><path d="M8 0V15M0.5 7.5H15.5" stroke="#555" stroke-width="3.2"/></svg><svg style="left:617px;top:1057px" width="16" height="5" viewBox="0 0 16 5"><path d="M0 2.3H15.3" stroke="#555" stroke-width="3.2"/></svg><svg style="left:645px;top:1053px" width="18" height="14" viewBox="0 0 18 14"><path d="M1 7L6.5 12.5L17 1.5" fill="none" stroke="#c6c6c6" stroke-width="3"/></svg><svg style="left:674px;top:1052px" width="16" height="16" viewBox="0 0 16 16"><path d="M1 1L15 15M15 1L1 15" stroke="#c6c6c6" stroke-width="3"/></svg><svg style="left:703px;top:1051px" width="17" height="17" viewBox="0 0 17 17"><path d="M14.3 5.5A6.5 6.5 0 1 0 14.7 12" fill="none" stroke="#505050" stroke-width="3.2"/><path d="M10 6.5L16.3 7.2L16 0.6Z" fill="#505050"/></svg><div class="a" style="left:733px;top:1052px;width:15px;height:15px;background:#c2c2c2"></div><svg style="left:1313px;top:1053px" width="20" height="14" viewBox="0 0 20 14"><rect x="0.5" y="0" width="3.2" height="13" fill="#606060"/><path d="M3.7 6.5L11 0.5V12.5Z" fill="#606060"/><rect x="9" y="4.8" width="10.5" height="3.4" fill="#606060"/></svg><svg style="left:1350px;top:1053px" width="17" height="14" viewBox="0 0 17 14"><path d="M0 6.5L8 0.5V12.5Z" fill="#606060"/><rect x="6" y="4.8" width="10.3" height="3.4" fill="#606060"/></svg><svg style="left:1420px;top:1053px" width="17" height="14" viewBox="0 0 17 14"><path d="M16.3 6.5L8.3 0.5V12.5Z" fill="#606060"/><rect x="0" y="4.8" width="10.3" height="3.4" fill="#606060"/></svg><svg style="left:1453px;top:1053px" width="20" height="14" viewBox="0 0 20 14"><rect x="15.8" y="0" width="3.2" height="13" fill="#606060"/><path d="M15.8 6.5L8.5 0.5V12.5Z" fill="#606060"/><rect x="0" y="4.8" width="10.5" height="3.4" fill="#606060"/></svg><svg style="left:1489px;top:1051.5px" width="17" height="17" viewBox="0 0 17 17"><g transform="translate(8.5,8.5)" fill="#606060"><rect x="-1.8" y="-8.5" width="3.6" height="3.5" rx=".5" transform="rotate(0)"/><rect x="-1.8" y="-8.5" width="3.6" height="3.5" rx=".5" transform="rotate(45)"/><rect x="-1.8" y="-8.5" width="3.6" height="3.5" rx=".5" transform="rotate(90)"/><rect x="-1.8" y="-8.5" width="3.6" height="3.5" rx=".5" transform="rotate(135)"/><rect x="-1.8" y="-8.5" width="3.6" height="3.5" rx=".5" transform="rotate(180)"/><rect x="-1.8" y="-8.5" width="3.6" height="3.5" rx=".5" transform="rotate(225)"/><rect x="-1.8" y="-8.5" width="3.6" height="3.5" rx=".5" transform="rotate(270)"/><rect x="-1.8" y="-8.5" width="3.6" height="3.5" rx=".5" transform="rotate(315)"/><circle r="6.2"/><circle r="3.6" fill="#efefef"/></g></svg><svg style="left:1540px;top:1050px" width="21" height="21" viewBox="0 0 21 21"><rect x="0.7" y="0.7" width="19.6" height="19.6" fill="#d9ecfb" stroke="#4a4a4a" stroke-width="1.4"/><rect x="0" y="0" width="21" height="3.2" fill="#4a4a4a"/><path d="M7.3 3V20.5M13.7 3V20.5M1 9.3H20M1 14.8H20" stroke="#4a4a4a" stroke-width="1.2"/></svg><svg style="left:1574px;top:1050px" width="21" height="21" viewBox="0 0 21 21"><rect x="0.7" y="0.7" width="19.6" height="19.6" fill="#f7f7f7" stroke="#4a4a4a" stroke-width="1.4"/><rect x="0" y="0" width="21" height="3.2" fill="#4a4a4a"/><path d="M4.3 7.5V10.5M4.3 12.5V15.5" stroke="#4a4a4a" stroke-width="1.5"/><rect x="7" y="7.3" width="10.5" height="3.2" rx="1" fill="none" stroke="#4a4a4a" stroke-width="1.3"/><rect x="7" y="12.5" width="10.5" height="3.2" rx="1" fill="none" stroke="#4a4a4a" stroke-width="1.3"/></svg>
<div class="a" style="left:1606px;top:173px;width:1px;height:903px;background:#e6e6e6"></div>
<div class="a" style="left:1607px;top:173px;width:350px;height:903px;background:#fff"></div>
<div class="t" style="left:1667px;top:227px;font-size:19.6px;line-height:26px;font-weight:bold;color:#383838">upwd</div>
<div class="t" style="left:1630px;top:272px;font-size:21.5px;line-height:26px;color:#7d7d7d">类型</div>
<div class="t" style="left:1630px;top:299px;font-size:19px;line-height:26px;color:#3a3a3a">varchar(255)</div>
<div class="t" style="left:1630px;top:341px;font-size:21.5px;line-height:26px;color:#7d7d7d">不是 null</div>
<div class="t" style="left:1630px;top:368px;font-size:19px;line-height:26px;color:#3a3a3a">否</div>
<div class="t" style="left:1630px;top:410px;font-size:21.5px;line-height:26px;color:#7d7d7d">默认值</div>
<div class="t" style="left:1630px;top:437px;font-size:19px;line-height:26px;color:#3a3a3a">(NULL)</div>
<div class="t" style="left:1630px;top:479px;font-size:21.5px;line-height:26px;color:#7d7d7d">注释</div>
<div class="t" style="left:1634px;top:506px;font-size:19px;line-height:26px;color:#3a3a3a;letter-spacing:1px">--</div>
<svg style="left:1742px;top:181px" width="21" height="21" viewBox="0 0 21 21"><circle cx="10.5" cy="10.5" r="9.6" fill="none" stroke="#444" stroke-width="1.6"/><circle cx="10.5" cy="5.8" r="1.3" fill="#444"/><rect x="9.3" y="8.5" width="2.5" height="7.5" fill="#444"/></svg><svg style="left:1779px;top:181px" width="21" height="21" viewBox="0 0 21 21"><rect x="0.8" y="0.8" width="19.4" height="19.4" rx="1.5" fill="none" stroke="#444" stroke-width="1.5"/><text x="10.7" y="13.8" font-size="7.8" font-family="Liberation Sans" font-weight="bold" fill="#444" text-anchor="middle" letter-spacing=".3">DDL</text></svg><svg style="left:1814px;top:179px" width="24" height="24" viewBox="0 0 24 24"><rect x="0" y="0" width="24" height="23.5" rx="1.5" fill="#2a7fe2"/><rect x="2.8" y="3" width="6.2" height="4.6" fill="#fff"/><rect x="2.8" y="9.5" width="6.2" height="4.6" fill="#fff"/><rect x="2.8" y="16.5" width="6.2" height="4.6" fill="#fff"/><rect x="14.8" y="3" width="6.2" height="4.6" fill="#fff"/><rect x="14.8" y="9.5" width="6.2" height="4.6" fill="#fff"/><rect x="14.8" y="16.5" width="6.2" height="4.6" fill="#fff"/></svg><svg style="left:1631px;top:228px" width="24" height="24" viewBox="0 0 24 24"><rect x="0" y="0" width="8.2" height="6.2" fill="#eeeeee"/><rect x="0" y="6" width="8.2" height="6.2" fill="#e2e2e2"/><rect x="0" y="12" width="8.2" height="6.2" fill="#d6d6d6"/><rect x="0" y="18" width="8.2" height="6.2" fill="#cbcbcb"/><rect x="8" y="0" width="8.2" height="6.2" fill="#a9d8fb"/><rect x="8" y="6" width="8.2" height="6.2" fill="#86c6f8"/><rect x="8" y="12" width="8.2" height="6.2" fill="#5cb0f4"/><rect x="8" y="18" width="8.2" height="6.2" fill="#3a9ef0"/><rect x="16" y="0" width="8.2" height="6.2" fill="#ececec"/><rect x="16" y="6" width="8.2" height="6.2" fill="#e0e0e0"/><rect x="16" y="12" width="8.2" height="6.2" fill="#d4d4d4"/><rect x="16" y="18" width="8.2" height="6.2" fill="#cacaca"/></svg>
</body></html>
